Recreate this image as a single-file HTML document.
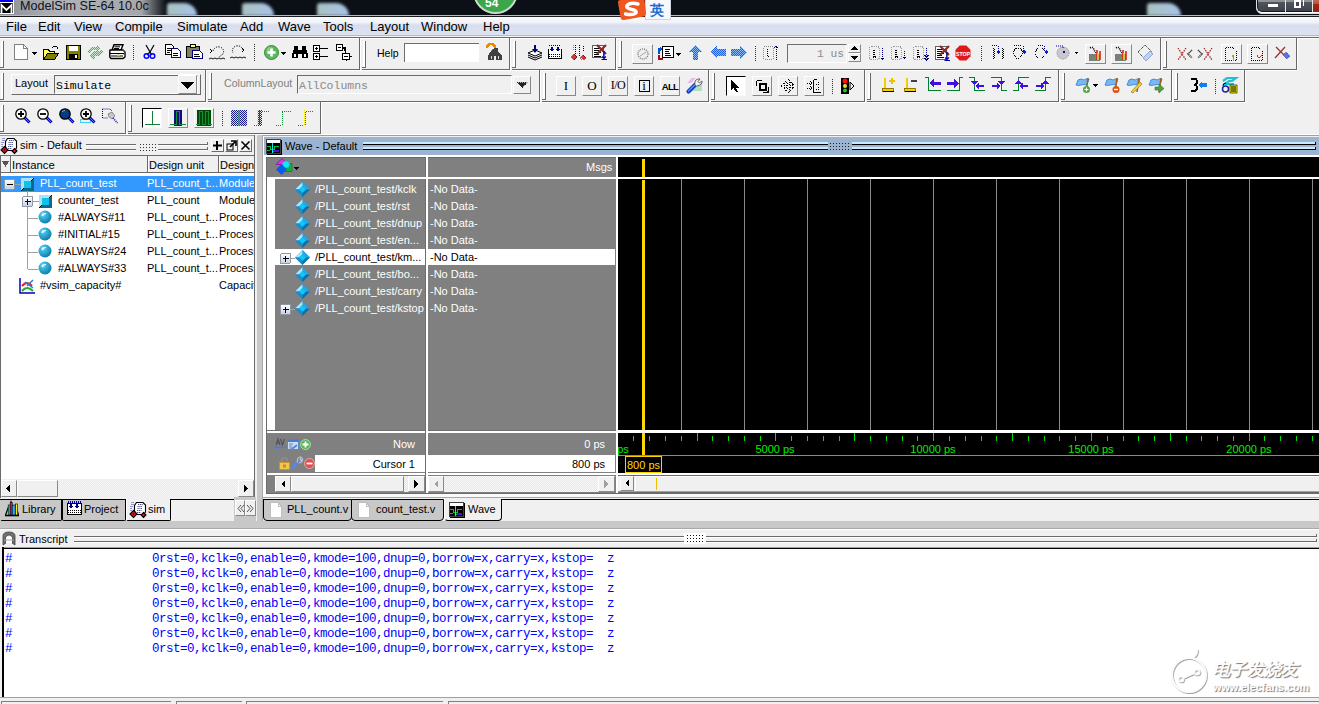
<!DOCTYPE html><html><head><meta charset="utf-8"><style>
*{box-sizing:border-box}
html,body{margin:0;padding:0}
body{width:1319px;height:704px;overflow:hidden;background:#f0f0f0;position:relative;font-family:"Liberation Sans",sans-serif;}
.a{position:absolute}
.t{position:absolute;white-space:pre;line-height:1}
svg{position:absolute;overflow:visible}
</style></head><body>
<div class="a" style="left:0px;top:0px;width:1319px;height:16px;background:#0b0f16"></div>
<div class="a" style="left:0px;top:0px;width:166px;height:16px;background:linear-gradient(90deg,#8a8e94 0%,#b0b4b8 35%,#a4a8ac 85%,rgba(11,15,22,0) 100%)"></div>
<div class="a" style="left:167px;top:3px;width:30px;height:13px;background:linear-gradient(90deg,#a8c0c0,#a8c4e8);border-radius:3px 13px 0 0;filter:blur(1.6px)"></div>
<div class="a" style="left:242px;top:3px;width:32px;height:13px;background:linear-gradient(90deg,#a8c0c0,#a8c4e8);border-radius:3px 13px 0 0;filter:blur(1.6px)"></div>
<div class="a" style="left:317px;top:3px;width:32px;height:13px;background:linear-gradient(90deg,#a8c0c0,#a8c4e8);border-radius:3px 13px 0 0;filter:blur(1.6px)"></div>
<div class="a" style="left:1147px;top:3px;width:34px;height:13px;background:linear-gradient(90deg,#a8c0c0,#a8c4e8);border-radius:3px 13px 0 0;filter:blur(1.6px)"></div>
<div class="a" style="left:0px;top:0px;width:13px;height:2px;background:#0000f0"></div>
<div class="a" style="left:13px;top:0px;width:1px;height:2px;background:#fff"></div>
<div class="a" style="left:0px;top:2px;width:14px;height:12px;background:#000;border:1px solid #fff;border-left:0"></div>
<svg style="left:0px;top:4px" width="13" height="10" viewBox="0 0 13 10"><path d="M1.5 9V1.2L6.5 6L11.5 1.2V9" fill="none" stroke="#fff" stroke-width="1.8"/></svg>
<div class="t" style="left:20px;top:0px;font-size:12.6px;color:#101020;">ModelSim SE-64 10.0c</div>
<div class="a" style="left:473px;top:-31px;width:45px;height:45px;border-radius:50%;background:#3aa84a;border:2px solid #cfd8cf"></div>
<div class="t" style="left:485px;top:-3px;font-size:12px;color:#fff;font-weight:bold">54</div>
<div class="a" style="left:1256px;top:-2px;width:70px;height:16px;border:1px solid #e0e0e0;border-radius:0 0 4px 6px;background:#fff"></div>
<div class="a" style="left:1257px;top:-2px;width:70px;height:14px;border-bottom:1px solid #181818;border-left:1px solid #181818;border-radius:0 0 3px 5px;background:linear-gradient(#9a9c9e 0px,#8c9094 4px,#50565e 4px,#3e444c 100%)"></div>
<div class="a" style="left:1285px;top:0px;width:1px;height:12px;background:#e8e8e8"></div>
<div class="a" style="left:1313px;top:0px;width:6px;height:12px;background:linear-gradient(#c06a58 0,#b85040 4px,#a02a10 4px,#902010 100%)"></div>
<div class="a" style="left:1312px;top:0px;width:1px;height:12px;background:#e8e8e8"></div>
<div class="a" style="left:1268px;top:4px;width:10px;height:3px;background:#fff;box-shadow:0 0 1px #334"></div>
<div class="a" style="left:1294px;top:0px;width:7px;height:8px;border:2px solid #fff;background:#445;box-shadow:0 0 1px #334"></div>
<div class="a" style="left:1303px;top:0px;width:1px;height:6px;background:#fff"></div>
<div class="a" style="left:0px;top:15px;width:1319px;height:1px;background:#b9bcc0"></div>
<div class="a" style="left:0px;top:16px;width:1319px;height:1px;background:#1a1c20"></div>
<div class="a" style="left:0px;top:17px;width:1319px;height:18px;background:linear-gradient(#fbfcfe 0%,#f0f2f8 30%,#d8deee 45%,#dde2f0 100%)"></div>
<div class="a" style="left:0px;top:35px;width:1319px;height:1px;background:#b6bac8"></div>
<div class="a" style="left:0px;top:36px;width:1319px;height:1px;background:#f4f4f4"></div>
<div class="a" style="left:0px;top:37px;width:1319px;height:1px;background:#6a6a6a"></div>
<div class="a" style="left:0px;top:38px;width:1319px;height:1px;background:#ffffff"></div>
<div class="a" style="left:645px;top:0px;width:26px;height:20px;background:#f6f8fb;border:1px solid #d0d4dc;border-top:0"></div>
<div class="t" style="left:650px;top:3px;font-size:14px;color:#1a6cd0;font-weight:bold">英</div>
<svg style="left:617px;top:-2px" width="30" height="24"><path d="M3 2 L24 -1 Q27 -1 27.5 2 L29 15 Q29.5 18 26.5 18.5 L7 22 Q4 22.5 3.5 19.5 L1 5 Q0.5 2.5 3 2Z" fill="#f0561e"/><path d="M21 6 Q13 4 10 7.5 Q8.5 10 15 11.5 Q20 12.5 19 15 Q16 17.5 8.5 16" fill="none" stroke="#fff" stroke-width="3.4" stroke-linecap="round"/></svg>
<div class="t" style="left:6px;top:20px;font-size:13px;color:#000;">File</div>
<div class="t" style="left:38px;top:20px;font-size:13px;color:#000;">Edit</div>
<div class="t" style="left:74px;top:20px;font-size:13px;color:#000;">View</div>
<div class="t" style="left:115px;top:20px;font-size:13px;color:#000;">Compile</div>
<div class="t" style="left:177px;top:20px;font-size:13px;color:#000;">Simulate</div>
<div class="t" style="left:240px;top:20px;font-size:13px;color:#000;">Add</div>
<div class="t" style="left:278px;top:20px;font-size:13px;color:#000;">Wave</div>
<div class="t" style="left:323px;top:20px;font-size:13px;color:#000;">Tools</div>
<div class="t" style="left:370px;top:20px;font-size:13px;color:#000;">Layout</div>
<div class="t" style="left:421px;top:20px;font-size:13px;color:#000;">Window</div>
<div class="t" style="left:483px;top:20px;font-size:13px;color:#000;">Help</div>
<div class="a" style="left:359px;top:38px;width:1px;height:32px;background:#686868"></div><div class="a" style="left:360px;top:38px;width:1px;height:33px;background:#fff"></div><div class="a" style="left:0px;top:69px;width:359px;height:1px;background:#686868"></div><div class="a" style="left:0px;top:70px;width:360px;height:1px;background:#fff"></div><div class="a" style="left:1px;top:41px;width:2px;height:26px;background:#fff"></div><div class="a" style="left:3px;top:41px;width:1px;height:27px;background:#686868"></div><div class="a" style="left:0px;top:67px;width:4px;height:1px;background:#686868"></div>
<div class="a" style="left:509px;top:38px;width:1px;height:32px;background:#686868"></div><div class="a" style="left:510px;top:38px;width:1px;height:33px;background:#fff"></div><div class="a" style="left:362px;top:69px;width:147px;height:1px;background:#686868"></div><div class="a" style="left:362px;top:70px;width:148px;height:1px;background:#fff"></div><div class="a" style="left:363px;top:41px;width:2px;height:26px;background:#fff"></div><div class="a" style="left:365px;top:41px;width:1px;height:27px;background:#686868"></div><div class="a" style="left:362px;top:67px;width:4px;height:1px;background:#686868"></div>
<div class="a" style="left:615px;top:38px;width:1px;height:32px;background:#686868"></div><div class="a" style="left:616px;top:38px;width:1px;height:33px;background:#fff"></div><div class="a" style="left:512px;top:69px;width:103px;height:1px;background:#686868"></div><div class="a" style="left:512px;top:70px;width:104px;height:1px;background:#fff"></div><div class="a" style="left:513px;top:41px;width:2px;height:26px;background:#fff"></div><div class="a" style="left:515px;top:41px;width:1px;height:27px;background:#686868"></div><div class="a" style="left:512px;top:67px;width:4px;height:1px;background:#686868"></div>
<div class="a" style="left:1160px;top:38px;width:1px;height:32px;background:#686868"></div><div class="a" style="left:1161px;top:38px;width:1px;height:33px;background:#fff"></div><div class="a" style="left:618px;top:69px;width:542px;height:1px;background:#686868"></div><div class="a" style="left:618px;top:70px;width:543px;height:1px;background:#fff"></div><div class="a" style="left:619px;top:41px;width:2px;height:26px;background:#fff"></div><div class="a" style="left:621px;top:41px;width:1px;height:27px;background:#686868"></div><div class="a" style="left:618px;top:67px;width:4px;height:1px;background:#686868"></div>
<div class="a" style="left:1296px;top:38px;width:1px;height:32px;background:#686868"></div><div class="a" style="left:1297px;top:38px;width:1px;height:33px;background:#fff"></div><div class="a" style="left:1163px;top:69px;width:133px;height:1px;background:#686868"></div><div class="a" style="left:1163px;top:70px;width:134px;height:1px;background:#fff"></div><div class="a" style="left:1164px;top:41px;width:2px;height:26px;background:#fff"></div><div class="a" style="left:1166px;top:41px;width:1px;height:27px;background:#686868"></div><div class="a" style="left:1163px;top:67px;width:4px;height:1px;background:#686868"></div>
<div class="a" style="left:205px;top:70px;width:1px;height:32px;background:#686868"></div><div class="a" style="left:206px;top:70px;width:1px;height:33px;background:#fff"></div><div class="a" style="left:0px;top:101px;width:205px;height:1px;background:#686868"></div><div class="a" style="left:0px;top:102px;width:206px;height:1px;background:#fff"></div><div class="a" style="left:1px;top:73px;width:2px;height:26px;background:#fff"></div><div class="a" style="left:3px;top:73px;width:1px;height:27px;background:#686868"></div><div class="a" style="left:0px;top:99px;width:4px;height:1px;background:#686868"></div>
<div class="a" style="left:539px;top:70px;width:1px;height:32px;background:#686868"></div><div class="a" style="left:540px;top:70px;width:1px;height:33px;background:#fff"></div><div class="a" style="left:208px;top:101px;width:331px;height:1px;background:#686868"></div><div class="a" style="left:208px;top:102px;width:332px;height:1px;background:#fff"></div><div class="a" style="left:209px;top:73px;width:2px;height:26px;background:#fff"></div><div class="a" style="left:211px;top:73px;width:1px;height:27px;background:#686868"></div><div class="a" style="left:208px;top:99px;width:4px;height:1px;background:#686868"></div>
<div class="a" style="left:708px;top:70px;width:1px;height:32px;background:#686868"></div><div class="a" style="left:709px;top:70px;width:1px;height:33px;background:#fff"></div><div class="a" style="left:542px;top:101px;width:166px;height:1px;background:#686868"></div><div class="a" style="left:542px;top:102px;width:167px;height:1px;background:#fff"></div><div class="a" style="left:543px;top:73px;width:2px;height:26px;background:#fff"></div><div class="a" style="left:545px;top:73px;width:1px;height:27px;background:#686868"></div><div class="a" style="left:542px;top:99px;width:4px;height:1px;background:#686868"></div>
<div class="a" style="left:864px;top:70px;width:1px;height:32px;background:#686868"></div><div class="a" style="left:865px;top:70px;width:1px;height:33px;background:#fff"></div><div class="a" style="left:711px;top:101px;width:153px;height:1px;background:#686868"></div><div class="a" style="left:711px;top:102px;width:154px;height:1px;background:#fff"></div><div class="a" style="left:712px;top:73px;width:2px;height:26px;background:#fff"></div><div class="a" style="left:714px;top:73px;width:1px;height:27px;background:#686868"></div><div class="a" style="left:711px;top:99px;width:4px;height:1px;background:#686868"></div>
<div class="a" style="left:1058px;top:70px;width:1px;height:32px;background:#686868"></div><div class="a" style="left:1059px;top:70px;width:1px;height:33px;background:#fff"></div><div class="a" style="left:867px;top:101px;width:191px;height:1px;background:#686868"></div><div class="a" style="left:867px;top:102px;width:192px;height:1px;background:#fff"></div><div class="a" style="left:868px;top:73px;width:2px;height:26px;background:#fff"></div><div class="a" style="left:870px;top:73px;width:1px;height:27px;background:#686868"></div><div class="a" style="left:867px;top:99px;width:4px;height:1px;background:#686868"></div>
<div class="a" style="left:1171px;top:70px;width:1px;height:32px;background:#686868"></div><div class="a" style="left:1172px;top:70px;width:1px;height:33px;background:#fff"></div><div class="a" style="left:1061px;top:101px;width:110px;height:1px;background:#686868"></div><div class="a" style="left:1061px;top:102px;width:111px;height:1px;background:#fff"></div><div class="a" style="left:1062px;top:73px;width:2px;height:26px;background:#fff"></div><div class="a" style="left:1064px;top:73px;width:1px;height:27px;background:#686868"></div><div class="a" style="left:1061px;top:99px;width:4px;height:1px;background:#686868"></div>
<div class="a" style="left:1244px;top:70px;width:1px;height:32px;background:#686868"></div><div class="a" style="left:1245px;top:70px;width:1px;height:33px;background:#fff"></div><div class="a" style="left:1174px;top:101px;width:70px;height:1px;background:#686868"></div><div class="a" style="left:1174px;top:102px;width:71px;height:1px;background:#fff"></div><div class="a" style="left:1175px;top:73px;width:2px;height:26px;background:#fff"></div><div class="a" style="left:1177px;top:73px;width:1px;height:27px;background:#686868"></div><div class="a" style="left:1174px;top:99px;width:4px;height:1px;background:#686868"></div>
<div class="a" style="left:125px;top:102px;width:1px;height:32px;background:#686868"></div><div class="a" style="left:126px;top:102px;width:1px;height:33px;background:#fff"></div><div class="a" style="left:0px;top:133px;width:125px;height:1px;background:#686868"></div><div class="a" style="left:0px;top:134px;width:126px;height:1px;background:#fff"></div><div class="a" style="left:1px;top:105px;width:2px;height:26px;background:#fff"></div><div class="a" style="left:3px;top:105px;width:1px;height:27px;background:#686868"></div><div class="a" style="left:0px;top:131px;width:4px;height:1px;background:#686868"></div>
<div class="a" style="left:320px;top:102px;width:1px;height:32px;background:#686868"></div><div class="a" style="left:321px;top:102px;width:1px;height:33px;background:#fff"></div><div class="a" style="left:128px;top:133px;width:192px;height:1px;background:#686868"></div><div class="a" style="left:128px;top:134px;width:193px;height:1px;background:#fff"></div><div class="a" style="left:129px;top:105px;width:2px;height:26px;background:#fff"></div><div class="a" style="left:131px;top:105px;width:1px;height:27px;background:#686868"></div><div class="a" style="left:128px;top:131px;width:4px;height:1px;background:#686868"></div>
<svg style="left:14px;top:44px" width="14" height="16" viewBox="0 0 14 16" shape-rendering="crispEdges"><path d="M0.5 0.5H9.5L13.5 4.5V15.5H0.5Z" fill="#fff" stroke="#808080"/><path d="M9.5 0.5V4.5H13.5" fill="none" stroke="#808080"/></svg>
<svg style="left:32px;top:52px" width="6" height="4" viewBox="0 0 6 4" shape-rendering="crispEdges"><path d="M0 0H5L2.5 3Z" fill="#000"/></svg>
<svg style="left:43px;top:45px" width="16" height="15" viewBox="0 0 16 15" shape-rendering="crispEdges"><path d="M9 3 Q11 0 14 2 L15 4" fill="none" stroke="#000" stroke-width="1"/><path d="M0.5 4.5H5.5L6.5 6.5H11.5V9.5H4.5L0.5 14.5Z" fill="#ffff60" stroke="#000"/><path d="M0.5 14.5L4.5 8.5H15.5L11.5 14.5Z" fill="#808000" stroke="#000"/></svg>
<svg style="left:66px;top:45px" width="15" height="15" viewBox="0 0 15 15" shape-rendering="crispEdges"><path d="M0.5 0.5H14.5V14.5H0.5Z" fill="#808000" stroke="#000"/><rect x="3" y="1" width="9" height="5" fill="#fff"/><rect x="3" y="9" width="9" height="5" fill="#000"/><rect x="9" y="10" width="2" height="3" fill="#fff"/></svg>
<svg style="left:87px;top:44px" width="17" height="17" viewBox="0 0 17 17" shape-rendering="crispEdges"><defs><pattern id="gck" width="2" height="2" patternUnits="userSpaceOnUse"><rect width="1" height="1" fill="#5aa866"/><rect x="1" y="1" width="1" height="1" fill="#5aa866"/><rect x="1" width="1" height="1" fill="#cce8d0"/><rect y="1" width="1" height="1" fill="#cce8d0"/></pattern></defs><path d="M0 8L4 3H10L10 1L13 4L10 7L9 6H5L2 9Z" fill="url(#gck)"/><path d="M3 12L7 7H12L14 5L16 8L12 12H8L8 14L6 16L3 13Z" fill="url(#gck)"/></svg>
<svg style="left:109px;top:44px" width="17" height="15" viewBox="0 0 17 15"><path d="M5 0.8H14L12 6H3Z" fill="#fff" stroke="#000" stroke-width="1.4"/><path d="M5.5 2.8H11M5 4.5H10" stroke="#000" stroke-width="1"/><path d="M1 6H14L16 8V13L14 14.5H2L0.8 13V7Z" fill="#fff" stroke="#000" stroke-width="1.4"/><path d="M1 9.5H15M2 12H14" stroke="#000" stroke-width="1.2"/><rect x="8" y="10.2" width="3" height="1.4" fill="#f0f000"/><path d="M14 6L16 8M14 10L16 12" stroke="#888" stroke-width="0.8" stroke-dasharray="1 1"/></svg>
<div class="a" style="left:133px;top:45px;width:1px;height:16px;background:repeating-linear-gradient(#333 0 1px,transparent 1px 2px)"></div>
<svg style="left:143px;top:45px" width="13" height="14" viewBox="0 0 13 14"><path d="M3 0 L7 7 L11 0 M7 7 L4 10 M7 7 L9 10" fill="none" stroke="#000" stroke-width="1.2"/><circle cx="3.5" cy="11" r="2.3" fill="none" stroke="#0000ff" stroke-width="1.5"/><circle cx="9.5" cy="11" r="2.3" fill="none" stroke="#0000ff" stroke-width="1.5"/></svg>
<svg style="left:165px;top:44px" width="16" height="14" viewBox="0 0 16 14" shape-rendering="crispEdges"><path d="M0.5 0.5H6.5L8.5 2.5V10.5H0.5Z" fill="#fff" stroke="#000"/><path d="M6.5 4.5H12.5L15.5 7.5V13.5H6.5Z" fill="#fff" stroke="#000080"/><path d="M2 4H6M2 6H6M2 8H5M8 9H13M8 11H13" stroke="#000"/></svg>
<svg style="left:186px;top:44px" width="17" height="15" viewBox="0 0 17 15" shape-rendering="crispEdges"><path d="M0.5 2.5H13.5V13.5H0.5Z" fill="#808060" stroke="#000"/><path d="M4.5 0.5H9.5V3.5H4.5Z" fill="#ffff80" stroke="#000"/><path d="M6.5 6.5H13.5L16.5 9.5V14.5H6.5Z" fill="#fff" stroke="#000080"/><path d="M8 10H13M8 12H14" stroke="#000"/></svg>
<svg style="left:209px;top:46px" width="17" height="14" viewBox="0 0 17 14"><path d="M4 5 Q6 0 11 1 Q16 3 14 8 L10 11" fill="none" stroke="#000" stroke-dasharray="1.2 1.2"/><path d="M1 3 L3 5 L1 7" fill="none" stroke="#000"/><path d="M0 13 L2 12 L4 13 L6 12 L8 13 L10 12 L12 13 L14 12 L16 13" fill="none" stroke="#000" stroke-width="0.9"/></svg>
<svg style="left:230px;top:45px" width="17" height="14" viewBox="0 0 17 14"><path d="M13 5 Q11 0 6 1 Q1 3 3 8" fill="none" stroke="#000" stroke-dasharray="1.2 1.2"/><path d="M12 3 L14 5 L12 7" fill="none" stroke="#000"/><path d="M0 13 L2 12 L4 13 L6 12 L8 13 L10 12 L12 13 L14 12 L16 13" fill="none" stroke="#000" stroke-width="0.9"/></svg>
<div class="a" style="left:254px;top:44px;width:1px;height:17px;background:repeating-linear-gradient(#333 0 1px,transparent 1px 2px)"></div>
<svg style="left:264px;top:45px" width="15" height="15" viewBox="0 0 15 15"><circle cx="7.5" cy="7.5" r="7" fill="#5cb85c" stroke="#3a8a3a"/><circle cx="6" cy="5.5" r="3.5" fill="#9ad89a" opacity="0.6"/><path d="M7.5 3.5V11.5M3.5 7.5H11.5" stroke="#fff" stroke-width="2.6"/></svg>
<svg style="left:281px;top:52px" width="6" height="4" viewBox="0 0 6 4" shape-rendering="crispEdges"><path d="M0 0H5L2.5 3Z" fill="#000"/></svg>
<svg style="left:292px;top:45px" width="16" height="14" viewBox="0 0 16 14" shape-rendering="crispEdges"><path d="M2 1H6V5H10V1H14V4L16 9V13H10V9H6V13H0V9L2 4Z" fill="#000"/><rect x="2" y="9" width="2" height="3" fill="#fff"/><rect x="12" y="9" width="2" height="3" fill="#fff"/></svg>
<svg style="left:313px;top:45px" width="16" height="15" viewBox="0 0 16 15" shape-rendering="crispEdges"><rect x="0.5" y="0.5" width="6" height="6" fill="#fff" stroke="#000"/><path d="M2 3.5H5M3.5 2V5" stroke="#000"/><rect x="0.5" y="8.5" width="6" height="6" fill="#fff" stroke="#000"/><path d="M2 11.5H5M3.5 10V13" stroke="#000"/><path d="M7 3.5H15M7 11.5H15" stroke="#000"/></svg>
<svg style="left:336px;top:44px" width="17" height="17" viewBox="0 0 17 17" shape-rendering="crispEdges"><rect x="0.5" y="0.5" width="6" height="6" fill="#fff" stroke="#000"/><path d="M2 3.5H5" stroke="#000"/><path d="M7 3.5H9.5V9" stroke="#000"/><rect x="6.5" y="9.5" width="7" height="6" fill="#fff" stroke="#000"/><path d="M8 12.5H12M14 12.5H16M10 16V17" stroke="#000"/></svg>
<div class="t" style="left:377px;top:48px;font-size:10.5px;color:#000;">Help</div>
<div class="a" style="left:404px;top:43px;width:75px;height:19px;background:#fff;border-top:1px solid #6d6d6d;border-left:1px solid #6d6d6d"></div>
<svg style="left:486px;top:44px" width="17" height="17" viewBox="0 0 17 17" shape-rendering="crispEdges"><path d="M1 4 Q1 0 5 0 Q9 0 9 4 Q9 6 6 7 V9" fill="none" stroke="#f08800" stroke-width="2.4"/><rect x="4" y="11" width="3" height="3" fill="#f08800"/><path d="M8 4H12V7L16 12V16H10V12H8V16H2V12L4 8Z" fill="#404040"/><rect x="5" y="12" width="1" height="3" fill="#ddd"/><rect x="12" y="12" width="1" height="3" fill="#ddd"/></svg>
<svg style="left:527px;top:45px" width="16" height="15" viewBox="0 0 16 15"><path d="M1 8 L8 5 L15 8 L8 11Z" fill="#fff" stroke="#000"/><path d="M1 10 L8 13 L15 10 M1 12 L8 15 L15 12" fill="none" stroke="#000"/><path d="M8 0V7" stroke="#000080" stroke-width="2"/><path d="M5 4L8 8L11 4Z" fill="#000080"/></svg>
<svg style="left:548px;top:44px" width="14" height="15" viewBox="0 0 14 15" shape-rendering="crispEdges"><path d="M0.5 4.5V14.5H13.5V4.5" fill="#fff" stroke="#000"/><path d="M1 10H13M1 12H13" stroke="#000" stroke-dasharray="1 1"/><path d="M1 1H13" stroke="#0000a0" stroke-dasharray="1 1"/><path d="M4 3V7M10 3V7" stroke="#000080" stroke-width="1.5"/><path d="M2 5L4 8L6 5ZM8 5L10 8L12 5Z" fill="#000080"/></svg>
<svg style="left:571px;top:45px" width="15" height="15" viewBox="0 0 15 15" shape-rendering="crispEdges"><path d="M4 0V9M8 0V11M12 1V6" stroke="#000" stroke-dasharray="1 1"/><path d="M2 0V6" stroke="#8080c0" stroke-dasharray="1 1"/><path d="M3 9L6 12L3 15L0 12Z" fill="#e03030" stroke="#000" stroke-width="0.5"/><path d="M12 10L14.5 12.5L12 15L9.5 12.5Z" fill="#e03030" stroke="#000" stroke-width="0.5"/></svg>
<svg style="left:592px;top:44px" width="16" height="17" viewBox="0 0 16 17" shape-rendering="crispEdges"><path d="M0.5 1.5H11.5V13.5H0.5Z" fill="#fff" stroke="#606060"/><path d="M2 4.5H8M2 6.5H7M2 8.5H9M2 10.5H7M2 12.5H9" stroke="#000"/></svg><svg style="left:592px;top:44px" width="16" height="17" viewBox="0 0 16 17"><path d="M5 1 L14 10 M14 1 L5 10" stroke="#902828" stroke-width="2.2"/><path d="M12 7V15M9.5 15.5H15M10 12.5L12 14.5L14 12.5" stroke="#0000b0" stroke-width="1.2" fill="none"/></svg>
<div class="a" style="left:632px;top:44px;width:21px;height:20px;background:#f0f0f0;border-top:1px solid #fff;border-left:1px solid #fff;border-right:1px solid #888;border-bottom:1px solid #888"></div>
<svg style="left:637px;top:48px" width="12" height="12" viewBox="0 0 12 12"><circle cx="6" cy="6" r="5" fill="none" stroke="#888" stroke-width="1.6" stroke-dasharray="1 1"/><path d="M3 8 L9 4" stroke="#a0a0c0"/></svg>
<svg style="left:657px;top:46px" width="18" height="14" viewBox="0 0 18 14" shape-rendering="crispEdges"><path d="M2 8V3H4" fill="none" stroke="#0050d0" stroke-width="2"/><path d="M3 1L6 3L3 5Z" fill="#0050d0"/><path d="M2 9V13H6" fill="none" stroke="#a01010" stroke-width="2"/><path d="M5.5 0.5H16.5V11.5H5.5Z" fill="#fff" stroke="#000"/><path d="M8 3H13M8 5H12M8 7H13M8 9H14" stroke="#000"/></svg>
<svg style="left:676px;top:53px" width="6" height="4" viewBox="0 0 6 4" shape-rendering="crispEdges"><path d="M0 0H5L2.5 3Z" fill="#000"/></svg>
<svg style="left:688px;top:45px" width="15" height="16" viewBox="0 0 15 16" shape-rendering="crispEdges"><defs><pattern id="bck1" width="2" height="2" patternUnits="userSpaceOnUse"><rect width="2" height="2" fill="#8ab8f0"/><rect width="1" height="1" fill="#1a60e0"/><rect x="1" y="1" width="1" height="1" fill="#1a60e0"/></pattern></defs><path d="M7 0L14 7H10V15H5V7H0Z" fill="url(#bck1)"/></svg>
<svg style="left:710px;top:46px" width="17" height="13" viewBox="0 0 17 13" shape-rendering="crispEdges"><defs><pattern id="bck2" width="2" height="2" patternUnits="userSpaceOnUse"><rect width="2" height="2" fill="#8ab8f0"/><rect width="1" height="1" fill="#1a60e0"/><rect x="1" y="1" width="1" height="1" fill="#1a60e0"/></pattern></defs><path d="M0 6L7 0V3H16V10H7V13Z" fill="url(#bck2)"/></svg>
<svg style="left:731px;top:46px" width="16" height="13" viewBox="0 0 16 13" shape-rendering="crispEdges"><defs><pattern id="bck3" width="2" height="2" patternUnits="userSpaceOnUse"><rect width="2" height="2" fill="#8ab8f0"/><rect width="1" height="1" fill="#1a60e0"/><rect x="1" y="1" width="1" height="1" fill="#1a60e0"/></pattern></defs><path d="M16 6L9 0V3H0V10H9V13Z" fill="url(#bck3)"/></svg>
<div class="a" style="left:755px;top:46px;width:1px;height:16px;background:repeating-linear-gradient(#333 0 1px,transparent 1px 2px)"></div>
<svg style="left:763px;top:45px" width="18" height="16" viewBox="0 0 18 16" shape-rendering="crispEdges"><rect x="0.5" y="1.5" width="10" height="13" rx="2" fill="none" stroke="#888" stroke-dasharray="1 1"/><path d="M4 4V11H7" stroke="#000" stroke-dasharray="1 1" fill="none"/><path d="M13 2V15" stroke="#000080" stroke-dasharray="1 1"/><path d="M11 3L13 1L15 3" stroke="#000080" fill="none"/></svg>
<div class="a" style="left:787px;top:44px;width:60px;height:19px;background:#f0f0f0;border-top:1px solid #6d6d6d;border-left:1px solid #6d6d6d;border-right:1px solid #fff;border-bottom:1px solid #fff"></div>
<div class="t" style="left:817px;top:49px;font-size:11.2px;color:#8a8a8a;font-family:'Liberation Mono',monospace">1 us</div>
<div class="a" style="left:848px;top:44px;width:13px;height:9px;background:#f0f0f0;border-top:1px solid #fff;border-left:1px solid #fff;border-right:1px solid #888;border-bottom:1px solid #888"></div>
<div class="a" style="left:848px;top:53px;width:13px;height:9px;background:#f0f0f0;border-top:1px solid #fff;border-left:1px solid #fff;border-right:1px solid #888;border-bottom:1px solid #888"></div>
<svg style="left:851px;top:46px" width="7" height="5" viewBox="0 0 7 5" shape-rendering="crispEdges"><path d="M3.5 0L7 4H0Z" fill="#000"/></svg>
<svg style="left:851px;top:56px" width="7" height="5" viewBox="0 0 7 5" shape-rendering="crispEdges"><path d="M0 0H7L3.5 4Z" fill="#000"/></svg>
<svg style="left:869px;top:45px" width="17" height="16" viewBox="0 0 17 16" shape-rendering="crispEdges"><rect x="0.5" y="1.5" width="10" height="13" rx="2.5" fill="none" stroke="#999" stroke-dasharray="1 1"/><path d="M4 4.5V12.5H8M5 4.5V11.5H8" stroke="#000" stroke-dasharray="1 1" fill="none"/><path d="M13.5 3V15" stroke="#000090" stroke-dasharray="1 1"/><path d="M12 13L13.5 14.5L15 13" stroke="#000090" fill="none"/></svg>
<svg style="left:891px;top:45px" width="17" height="16" viewBox="0 0 17 16" shape-rendering="crispEdges"><rect x="0.5" y="1.5" width="10" height="13" rx="2.5" fill="none" stroke="#999" stroke-dasharray="1 1"/><path d="M4 4.5V12.5H8M5 4.5V11.5H8" stroke="#000" stroke-dasharray="1 1" fill="none"/><path d="M13.5 6V13" stroke="#000090" stroke-dasharray="1 1"/><path d="M12 12L13.5 13.5L15 12" stroke="#000090" fill="none"/></svg>
<svg style="left:913px;top:45px" width="17" height="16" viewBox="0 0 17 16" shape-rendering="crispEdges"><rect x="0.5" y="1.5" width="10" height="13" rx="2.5" fill="none" stroke="#999" stroke-dasharray="1 1"/><path d="M4 4.5V12.5H8M5 4.5V11.5H8" stroke="#000" stroke-dasharray="1 1" fill="none"/><path d="M13.5 3V12" stroke="#000090" stroke-dasharray="1 1"/><path d="M11.5 10L13.5 12L15.5 10M11.5 13L13.5 15L15.5 13" stroke="#000090" fill="none"/></svg>
<svg style="left:935px;top:45px" width="17" height="17" viewBox="0 0 17 17" shape-rendering="crispEdges"><path d="M0.5 1.5H11.5V14.5H0.5Z" fill="#fff" stroke="#606060"/><path d="M2 4.5H8M2 6.5H7M2 8.5H9M2 10.5H7M2 12.5H9" stroke="#000"/></svg><svg style="left:935px;top:45px" width="17" height="17" viewBox="0 0 17 17"><path d="M5 1 L14 10 M14 1 L5 10" stroke="#902828" stroke-width="2.2"/><path d="M12 7V15M9.5 15.5H15M10 12.5L12 14.5L14 12.5" stroke="#0000b0" stroke-width="1.2" fill="none"/></svg>
<svg style="left:955px;top:45px" width="16" height="16" viewBox="0 0 16 16"><path d="M4.7 0.5H11.3L15.5 4.7V11.3L11.3 15.5H4.7L0.5 11.3V4.7Z" fill="#e01818"/><text x="8" y="10.6" font-size="6.2" font-weight="bold" fill="#fff" text-anchor="middle" font-family="Liberation Sans" textLength="14" lengthAdjust="spacingAndGlyphs">STOP</text></svg>
<div class="a" style="left:981px;top:46px;width:1px;height:16px;background:repeating-linear-gradient(#333 0 1px,transparent 1px 2px)"></div>
<svg style="left:991px;top:45px" width="14" height="15" viewBox="0 0 14 15" shape-rendering="crispEdges"><path d="M1 0.5H7M7 1V6" stroke="#000090" stroke-dasharray="1 1" fill="none"/><path d="M2 3V14M3 4V13M11 3V14M12 4V13" stroke="#000" stroke-dasharray="1 1"/><path d="M7 5L9 7L7 9L5 7Z" fill="#1020c0"/></svg>
<svg style="left:1012px;top:45px" width="15" height="15" viewBox="0 0 15 15" shape-rendering="crispEdges"><path d="M2 0.5H10M11 1V6" stroke="#000090" stroke-dasharray="1 1" fill="none"/><path d="M4 3L1 7L4 13M8 3L11 7L8 13" stroke="#000" stroke-dasharray="1 1" fill="none"/><path d="M4 3H8M4 13H8" stroke="#000" stroke-dasharray="1 1"/><path d="M12 5L14 7L12 9L10 7Z" fill="#1020c0"/></svg>
<svg style="left:1033px;top:45px" width="16" height="15" viewBox="0 0 16 15" shape-rendering="crispEdges"><path d="M5 0.5H11M11 1V6" stroke="#000090" stroke-dasharray="1 1" fill="none"/><path d="M5 3L1 8L5 13M9 3L12 6M9 13L12 10" stroke="#000" stroke-dasharray="1 1" fill="none"/><path d="M13 5L15 7L13 9L11 7Z" fill="#1020c0"/></svg>
<svg style="left:1056px;top:45px" width="15" height="16" viewBox="0 0 15 16"><circle cx="7" cy="8" r="6" fill="#c8c8c8" stroke="#888" stroke-dasharray="1 1"/><path d="M0 1H7V4" stroke="#000080" stroke-dasharray="1 1" fill="none"/><rect x="7" y="6" width="2" height="2" fill="#0000c0"/></svg>
<svg style="left:1074px;top:52px" width="5" height="3" viewBox="0 0 5 3" shape-rendering="crispEdges"><path d="M0 0H4L2 2Z" fill="#000"/></svg>
<div class="a" style="left:1085px;top:44px;width:21px;height:20px;background:#f0f0f0;border-top:1px solid #fff;border-left:1px solid #fff;border-right:1px solid #888;border-bottom:1px solid #888"></div>
<svg style="left:1088px;top:47px" width="16" height="15" viewBox="0 0 16 15"><rect x="1" y="7" width="11" height="7" fill="#707070" opacity="0.9"/><path d="M2 1 Q5 -1 6 3 L8 6" fill="none" stroke="#000" stroke-width="1.5" stroke-dasharray="1 1"/><path d="M9 3V13M12 4V13" stroke="#e02020" stroke-width="1.6"/><path d="M10 6V13" stroke="#e0e020" stroke-width="1.6"/><path d="M5 13 L8 10" stroke="#30c030" stroke-width="1.2"/></svg>
<div class="a" style="left:1111px;top:44px;width:21px;height:20px;background:#f0f0f0;border-top:1px solid #fff;border-left:1px solid #fff;border-right:1px solid #888;border-bottom:1px solid #888"></div>
<svg style="left:1114px;top:47px" width="16" height="15" viewBox="0 0 16 15"><rect x="1" y="7" width="11" height="7" fill="#707070" opacity="0.9"/><path d="M2 1 Q5 -1 6 3 L8 6" fill="none" stroke="#000" stroke-width="1.5" stroke-dasharray="1 1"/><path d="M9 3V13M12 4V13" stroke="#e02020" stroke-width="1.6"/><path d="M10 6V13" stroke="#e0e020" stroke-width="1.6"/><path d="M5 13 L8 10" stroke="#30c030" stroke-width="1.2"/></svg>
<svg style="left:1137px;top:45px" width="17" height="16" viewBox="0 0 17 16"><path d="M1 7 L8 0 L15 7 L8 14Z" fill="none" stroke="#000" stroke-dasharray="1 1"/><path d="M6 13 L13 6 L16 9 L9 16Z" fill="#c0d0f0" stroke="#90a8e0"/></svg>
<svg style="left:1177px;top:48px" width="16" height="12" viewBox="0 0 16 12"><path d="M1 0 L9 12 M9 0 L1 12" stroke="#a02020" stroke-width="1.2" stroke-dasharray="1.5 1"/><path d="M15 2 L11 6 L15 10" fill="none" stroke="#333" stroke-width="1.6" stroke-dasharray="1 0.6"/></svg>
<svg style="left:1198px;top:48px" width="16" height="12" viewBox="0 0 16 12"><path d="M6 0 L14 12 M14 0 L6 12" stroke="#a02020" stroke-width="1.2" stroke-dasharray="1.5 1"/><path d="M0 2 L4 6 L0 10" fill="none" stroke="#333" stroke-width="1.6" stroke-dasharray="1 0.6"/></svg>
<div class="a" style="left:1221px;top:44px;width:21px;height:20px;background:#f0f0f0;border-top:1px solid #fff;border-left:1px solid #fff;border-right:1px solid #888;border-bottom:1px solid #888"></div>
<svg style="left:1225px;top:47px" width="13" height="15" viewBox="0 0 13 15" shape-rendering="crispEdges"><path d="M0.5 0.5H7.5L11.5 4.5V13.5H0.5Z" fill="none" stroke="#000" stroke-dasharray="1 1"/><path d="M7 8 L8 10 L9 8 M8 10V14" stroke="#b0a020" fill="none"/></svg>
<div class="a" style="left:1247px;top:44px;width:21px;height:20px;background:#f0f0f0;border-top:1px solid #fff;border-left:1px solid #fff;border-right:1px solid #888;border-bottom:1px solid #888"></div>
<svg style="left:1251px;top:47px" width="13" height="15" viewBox="0 0 13 15" shape-rendering="crispEdges"><path d="M0.5 0.5H7.5L11.5 4.5V13.5H0.5Z" fill="none" stroke="#000" stroke-dasharray="1 1"/><path d="M6 9 L8 11 L10 9" stroke="#e02020" fill="none"/><rect x="6" y="8" width="1" height="1" fill="#e02020"/><rect x="10" y="8" width="1" height="1" fill="#e02020"/></svg>
<svg style="left:1274px;top:46px" width="17" height="15" viewBox="0 0 17 15"><path d="M2 1 L12 11 M11 1 L1 12" stroke="#a03030" stroke-width="1.3"/><path d="M9 9 L12 6 L16 10 L13 13Z" fill="#6070e0" stroke="#3040c0" stroke-dasharray="1 1"/></svg>
<div class="a" style="left:11px;top:74px;width:190px;height:21px;border-top:1px solid #fff;border-left:1px solid #fff;border-right:1px solid #6a6a6a;border-bottom:1px solid #6a6a6a"></div>
<div class="t" style="left:15px;top:78px;font-size:11px;color:#000;">Layout</div>
<div class="a" style="left:54px;top:75px;width:144px;height:19px;border-top:1px solid #6a6a6a;border-left:1px solid #6a6a6a;border-right:1px solid #fff;border-bottom:1px solid #fff"></div>
<div class="t" style="left:56px;top:80px;font-size:11.5px;color:#000;font-family:'Liberation Mono',monospace">Simulate</div>
<div class="a" style="left:178px;top:75px;width:19px;height:19px;background:#f0f0f0;border-top:1px solid #fff;border-left:1px solid #fff;border-right:1px solid #888;border-bottom:1px solid #888"></div>
<svg style="left:181px;top:82px" width="13" height="7" viewBox="0 0 13 7" shape-rendering="crispEdges"><path d="M0 0H13L6.5 7Z" fill="#000"/></svg>
<div class="t" style="left:224px;top:78px;font-size:10.6px;color:#808080;">ColumnLayout</div>
<div class="a" style="left:297px;top:75px;width:215px;height:19px;border-top:1px solid #6a6a6a;border-left:1px solid #6a6a6a;border-right:1px solid #fff;border-bottom:1px solid #fff"></div>
<div class="t" style="left:299px;top:80px;font-size:11.5px;color:#8a8a8a;font-family:'Liberation Mono',monospace">AllColumns</div>
<div class="a" style="left:513px;top:76px;width:18px;height:18px;background:#f0f0f0;border-top:1px solid #fff;border-left:1px solid #fff;border-right:1px solid #888;border-bottom:1px solid #888"></div>
<svg style="left:516px;top:82px" width="12" height="7" viewBox="0 0 12 7" shape-rendering="crispEdges"><path d="M0 0H12L6 6Z" fill="#000" opacity="0.85"/><path d="M0 0H12L6 6Z" fill="none" stroke="#f0f0f0" stroke-width="0.7" stroke-dasharray="1 1"/></svg>
<div class="a" style="left:556px;top:76px;width:20px;height:20px;background:#f0f0f0;border-top:1px solid #fff;border-left:1px solid #fff;border-right:1px solid #888;border-bottom:1px solid #888"></div>
<div class="t" style="left:556px;top:79px;width:20px;text-align:center;color:#000;font-family:'Liberation Serif';font-size:13px">I</div>
<div class="a" style="left:582px;top:76px;width:20px;height:20px;background:#f0f0f0;border-top:1px solid #fff;border-left:1px solid #fff;border-right:1px solid #888;border-bottom:1px solid #888"></div>
<div class="t" style="left:582px;top:79px;width:20px;text-align:center;color:#000;font-family:'Liberation Serif';font-size:13px">O</div>
<div class="a" style="left:608px;top:76px;width:20px;height:20px;background:#f0f0f0;border-top:1px solid #fff;border-left:1px solid #fff;border-right:1px solid #888;border-bottom:1px solid #888"></div>
<div class="t" style="left:608px;top:79px;width:20px;text-align:center;color:#000;font-family:'Liberation Serif';font-size:12px;letter-spacing:-0.5px">I/O</div>
<div class="a" style="left:634px;top:76px;width:20px;height:20px;background:#f0f0f0;border-top:1px solid #fff;border-left:1px solid #fff;border-right:1px solid #888;border-bottom:1px solid #888"></div>
<div class="t" style="left:634px;top:79px;width:20px;text-align:center;color:#000;font-family:'Liberation Serif';font-size:13px">i</div>
<div class="a" style="left:660px;top:76px;width:20px;height:20px;background:#f0f0f0;border-top:1px solid #fff;border-left:1px solid #fff;border-right:1px solid #888;border-bottom:1px solid #888"></div>
<div class="t" style="left:660px;top:79px;width:20px;text-align:center;color:#000;font-weight:bold;font-size:9.5px;letter-spacing:-0.6px;padding-top:3px">ALL</div>
<div class="a" style="left:639px;top:80px;width:11px;height:12px;border:1px solid #000"></div>
<svg style="left:686px;top:77px" width="17" height="17" viewBox="0 0 17 17"><path d="M1 6 L6 1 H10 L5 6Z" fill="#e8b8e8"/><rect x="6" y="7" width="10" height="7" fill="#b8dcc0"/><path d="M2.5 14.5 L9.5 7.5" stroke="#1040d0" stroke-width="4.2" stroke-linecap="round"/><path d="M2.5 14 L8.5 8" stroke="#5a90f0" stroke-width="1.4" stroke-linecap="round"/><path d="M9 8 Q8 3 12 2 L14 2 L12 4.5 L13.5 6 L16 4 Q16.5 8 11 9" fill="#f4f4f4" stroke="#606060" stroke-width="1"/></svg>
<div class="a" style="left:726px;top:76px;width:20px;height:20px;background:#fff;border-top:1px solid #000;border-left:1px solid #000;border-right:1px solid #f8f8f8;border-bottom:1px solid #f8f8f8"></div>
<svg style="left:731px;top:80px" width="10" height="13" viewBox="0 0 10 13" shape-rendering="crispEdges"><path d="M0 0V10L2.5 8L5 12H7L5 7.5H8Z" fill="#000"/></svg>
<div class="a" style="left:752px;top:76px;width:20px;height:20px;background:#f0f0f0;border-top:1px solid #fff;border-left:1px solid #fff;border-right:1px solid #888;border-bottom:1px solid #888"></div>
<svg style="left:756px;top:80px" width="13" height="13" viewBox="0 0 13 13" shape-rendering="crispEdges"><path d="M0.5 0.5H6M0.5 0.5V6" stroke="#000" fill="none"/><rect x="3.5" y="3.5" width="6" height="6" fill="none" stroke="#000" stroke-width="2"/><path d="M12 7V12H7M10 10L12 12" stroke="#000" fill="none"/></svg>
<div class="a" style="left:778px;top:76px;width:20px;height:20px;background:#f0f0f0;border-top:1px solid #fff;border-left:1px solid #fff;border-right:1px solid #888;border-bottom:1px solid #888"></div>
<svg style="left:781px;top:79px" width="15" height="15" viewBox="0 0 15 15" shape-rendering="crispEdges"><path d="M7 0L10 3H8V6H11V4L14 7L11 10V8H8V11H10L7 14L4 11H6V8H3V10L0 7L3 4V6H6V3H4Z" fill="none" stroke="#000" stroke-dasharray="1 1"/></svg>
<div class="a" style="left:804px;top:76px;width:20px;height:20px;background:#f0f0f0;border-top:1px solid #fff;border-left:1px solid #fff;border-right:1px solid #888;border-bottom:1px solid #888"></div>
<svg style="left:806px;top:79px" width="16" height="14" viewBox="0 0 16 14" shape-rendering="crispEdges"><path d="M7.5 0.5H11M7.5 0.5V13.5H15" stroke="#000" fill="none"/><path d="M1 4H6M1 9H6M12 3V7M10 5H14M12 8V12M10 10H14" stroke="#000" stroke-dasharray="1 1"/><path d="M4 2L6 4L4 6M4 7L6 9L4 11" stroke="#000" fill="none"/></svg>
<div class="a" style="left:832px;top:79px;width:1px;height:16px;background:repeating-linear-gradient(#333 0 1px,transparent 1px 2px)"></div>
<svg style="left:841px;top:78px" width="17" height="17" viewBox="0 0 17 17"><rect x="0" y="0" width="8" height="16" fill="#000"/><circle cx="4" cy="3" r="2.5" fill="#ff1010"/><circle cx="4" cy="8" r="2" fill="#e8e030"/><circle cx="4" cy="12.5" r="2" fill="#30c030"/><path d="M9 4 L13 8 L9 12Z" fill="none" stroke="#000"/><path d="M8 8H9" stroke="#30a0e0"/></svg>
<svg style="left:881px;top:77px" width="15" height="15" viewBox="0 0 15 15" shape-rendering="crispEdges"><path d="M1 11H12V14H1Z" fill="#f0d000" stroke="#806000" stroke-width="0.8"/><path d="M4 1V11" stroke="#f0d000" stroke-width="2.2"/><path d="M8 4H14M11 1V7" stroke="#f0c000" stroke-width="1.6"/><path d="M2 14H13" stroke="#000"/></svg>
<svg style="left:903px;top:77px" width="15" height="15" viewBox="0 0 15 15" shape-rendering="crispEdges"><path d="M1 11H12V14H1Z" fill="#f0d000" stroke="#806000" stroke-width="0.8"/><path d="M4 1V11" stroke="#f0d000" stroke-width="2.2"/><path d="M8 4H14" stroke="#404040" stroke-width="1.4"/><path d="M2 14H13" stroke="#000"/></svg>
<svg style="left:925px;top:77px" width="17" height="15" viewBox="0 0 17 15" shape-rendering="crispEdges"><path d="M0 0.5H3.5V13.5H16" stroke="#00802a" fill="none" stroke-width="1.3"/><path d="M4 6L9 2V5H16V8H9V11Z" fill="#4010e0"/></svg>
<svg style="left:947px;top:77px" width="17" height="15" viewBox="0 0 17 15" shape-rendering="crispEdges"><path d="M0 13.5H12.5V0.5H16" stroke="#00802a" fill="none" stroke-width="1.3"/><path d="M12 6L7 2V5H0V8H7V11Z" fill="#4010e0"/></svg>
<svg style="left:969px;top:77px" width="17" height="15" viewBox="0 0 17 15" shape-rendering="crispEdges"><path d="M0 0.5H5.5V13.5H16" stroke="#00802a" fill="none" stroke-width="1.3"/><path d="M1 4H10L5.5 8Z" fill="#4010e0"/><path d="M6 9L10 6V8H15V10H10V12Z" fill="#4010e0"/></svg>
<svg style="left:991px;top:77px" width="17" height="15" viewBox="0 0 17 15" shape-rendering="crispEdges"><path d="M0 0.5H10.5V13.5H16" stroke="#00802a" fill="none" stroke-width="1.3"/><path d="M6 4H15L10.5 8Z" fill="#4010e0"/><path d="M10 9L6 6V8H1V10H6V12Z" fill="#4010e0"/></svg>
<svg style="left:1013px;top:77px" width="17" height="15" viewBox="0 0 17 15" shape-rendering="crispEdges"><path d="M0 13.5H5.5V0.5H16" stroke="#00802a" fill="none" stroke-width="1.3"/><path d="M1 7H10L5.5 3Z" fill="#4010e0"/><path d="M6 9L10 6V8H15V10H10V12Z" fill="#4010e0"/></svg>
<svg style="left:1035px;top:77px" width="17" height="15" viewBox="0 0 17 15" shape-rendering="crispEdges"><path d="M0 13.5H10.5V0.5H16" stroke="#00802a" fill="none" stroke-width="1.3"/><path d="M6 7H15L10.5 3Z" fill="#4010e0"/><path d="M10 9L6 6V8H1V10H6V12Z" fill="#4010e0"/></svg>
<svg style="left:1075px;top:77px" width="17" height="16" viewBox="0 0 17 16"><path d="M1 8 L3 3 Q6 1 9 3 Q12 1 14 2 L12 8 Q9 7 6 8 Q3 9 1 8Z" fill="#7ab8f0" stroke="#2080e0" stroke-width="0.8"/><path d="M13 1 L11 15" stroke="#a06020" stroke-width="1.6"/><circle cx="11.5" cy="12.5" r="3.5" fill="#50a040"/><path d="M11.5 10.5V14.5M9.5 12.5H13.5" stroke="#fff" stroke-width="1.2"/></svg>
<svg style="left:1093px;top:84px" width="6" height="4" viewBox="0 0 6 4" shape-rendering="crispEdges"><path d="M0 0H5L2.5 3Z" fill="#000"/></svg>
<svg style="left:1104px;top:77px" width="17" height="16" viewBox="0 0 17 16"><path d="M1 8 L3 3 Q6 1 9 3 Q12 1 14 2 L12 8 Q9 7 6 8 Q3 9 1 8Z" fill="#7ab8f0" stroke="#2080e0" stroke-width="0.8"/><path d="M13 1 L11 15" stroke="#a06020" stroke-width="1.6"/><circle cx="12" cy="12.5" r="3.5" fill="#e05010"/><path d="M10 12.5H14" stroke="#fff" stroke-width="1.4"/></svg>
<svg style="left:1126px;top:77px" width="17" height="16" viewBox="0 0 17 16"><path d="M1 8 L3 3 Q6 1 9 3 Q12 1 14 2 L12 8 Q9 7 6 8 Q3 9 1 8Z" fill="#7ab8f0" stroke="#2080e0" stroke-width="0.8"/><path d="M13 1 L11 15" stroke="#a06020" stroke-width="1.6"/><path d="M5 15 L14 5 L16 7 L7 16Z" fill="#f0d040" stroke="#b08020" stroke-width="0.8"/></svg>
<svg style="left:1148px;top:77px" width="17" height="16" viewBox="0 0 17 16"><path d="M1 8 L3 3 Q6 1 9 3 Q12 1 14 2 L12 8 Q9 7 6 8 Q3 9 1 8Z" fill="#7ab8f0" stroke="#2080e0" stroke-width="0.8"/><path d="M13 1 L11 15" stroke="#a06020" stroke-width="1.6"/><path d="M7 10H11V7L16 11.5L11 16V13H7Z" fill="#50a040" stroke="#308020" stroke-width="0.6"/></svg>
<svg style="left:1191px;top:78px" width="17" height="14" viewBox="0 0 17 14" shape-rendering="crispEdges"><path d="M0 1H4Q6 1 6 4Q6 7 3 7Q6 7 6 10Q6 13 3 13H0" fill="none" stroke="#000" stroke-width="2"/><path d="M7 7L11 3V5H16V9H11V11Z" fill="#1080f0"/></svg>
<div class="a" style="left:1215px;top:79px;width:1px;height:16px;background:repeating-linear-gradient(#333 0 1px,transparent 1px 2px)"></div>
<svg style="left:1221px;top:77px" width="17" height="17" viewBox="0 0 17 17"><path d="M2 4 L6 1 H15 L11 4 H8 L4 7 H13" fill="none" stroke="#20c0d0" stroke-width="2.2"/><path d="M2 9 Q2 6 5 6" stroke="#000" fill="none"/><circle cx="4.5" cy="12" r="3" fill="none" stroke="#2020a0" stroke-width="1.5"/><rect x="9" y="8" width="7" height="8" fill="#f0f000" stroke="#000" stroke-width="0.6"/><path d="M10 10H15M10 12H15M10 14H15" stroke="#000"/></svg>
<svg style="left:15px;top:108px" width="16" height="16" viewBox="0 0 16 16"><path d="M9 9 L14.5 14.5" stroke="#0000c0" stroke-width="3"/><path d="M9.5 9.5 L14 14" stroke="#8090ff" stroke-width="0.8"/><circle cx="6" cy="6" r="5.2" fill="#fff" stroke="#000" stroke-width="1.3"/><path d="M6 3V9M3 6H9" stroke="#000" stroke-width="1.8"/></svg>
<svg style="left:37px;top:108px" width="16" height="16" viewBox="0 0 16 16"><path d="M9 9 L14.5 14.5" stroke="#0000c0" stroke-width="3"/><path d="M9.5 9.5 L14 14" stroke="#8090ff" stroke-width="0.8"/><circle cx="6" cy="6" r="5.2" fill="#fff" stroke="#000" stroke-width="1.3"/><path d="M3 6H9" stroke="#000" stroke-width="1.8"/></svg>
<svg style="left:59px;top:108px" width="16" height="16" viewBox="0 0 16 16"><path d="M9 9 L14.5 14.5" stroke="#0000c0" stroke-width="3"/><path d="M9.5 9.5 L14 14" stroke="#8090ff" stroke-width="0.8"/><circle cx="6" cy="6" r="5.2" fill="#003c80" stroke="#000" stroke-width="1.3"/><path d="M3 4 Q4 2.5 6 2.5" stroke="#aac" fill="none"/></svg>
<svg style="left:80px;top:108px" width="16" height="16" viewBox="0 0 16 16"><rect x="0.5" y="11.5" width="10" height="3" fill="none" stroke="#40d0f0"/><path d="M9 9 L14.5 14.5" stroke="#0000c0" stroke-width="3"/><path d="M9.5 9.5 L14 14" stroke="#8090ff" stroke-width="0.8"/><circle cx="6" cy="6" r="5.2" fill="#fff" stroke="#000" stroke-width="1.3"/><path d="M6 3V9M3 6H9" stroke="#000" stroke-width="1.8"/></svg>
<svg style="left:102px;top:108px" width="17" height="17" viewBox="0 0 17 17"><path d="M0.5 1H8 M0.5 1V10H6" stroke="#0000a0" fill="none" stroke-dasharray="1 1"/><path d="M8 1 L10 3" stroke="#0000a0" stroke-dasharray="1 1"/><path d="M6 6 L10 4 L13 8 L10 11 L7 9Z" fill="#c8c8c8" stroke="#555" stroke-width="0.6"/><path d="M11 10 L15.5 15" stroke="#0000c0" stroke-dasharray="1 1" stroke-width="1.6"/></svg>
<div class="a" style="left:142px;top:108px;width:20px;height:20px;background:#fff;border-top:1px solid #000;border-left:1px solid #000;border-right:1px solid #f8f8f8;border-bottom:1px solid #f8f8f8"></div>
<svg style="left:145px;top:111px" width="15" height="15" viewBox="0 0 15 15" shape-rendering="crispEdges"><path d="M7.5 0V13M0 13.5H15" stroke="#108030" stroke-width="1.2"/></svg>
<div class="a" style="left:168px;top:108px;width:20px;height:20px;background:#f0f0f0;border-top:1px solid #fff;border-left:1px solid #fff;border-right:1px solid #888;border-bottom:1px solid #888"></div>
<svg style="left:170px;top:110px" width="16" height="16" viewBox="0 0 16 16" shape-rendering="crispEdges"><rect x="4" y="0" width="8" height="16" fill="#10107a"/><path d="M0 14.5H6.5V1.5H9.5V14.5H16" stroke="#109030" fill="none"/></svg>
<div class="a" style="left:194px;top:108px;width:20px;height:20px;background:#f0f0f0;border-top:1px solid #fff;border-left:1px solid #fff;border-right:1px solid #888;border-bottom:1px solid #888"></div>
<svg style="left:196px;top:110px" width="16" height="16" viewBox="0 0 16 16" shape-rendering="crispEdges"><rect x="1" y="0" width="14" height="16" fill="#004808"/><path d="M0 14.5H3.5V1.5H6.5V14.5H9.5V1.5H12.5V14.5H16" stroke="#109030" fill="none"/></svg>
<div class="a" style="left:222px;top:111px;width:1px;height:16px;background:repeating-linear-gradient(#333 0 1px,transparent 1px 2px)"></div>
<div class="a" style="left:231px;top:110px;width:16px;height:16px;background:repeating-conic-gradient(#1a1a90 0 25%,#d8d8f0 0 50%) 0 0/2px 2px"></div>
<div class="a" style="left:238px;top:110px;width:2px;height:16px;background:#30a040;opacity:0.6"></div>
<div class="a" style="left:258px;top:110px;width:4px;height:16px;background:repeating-conic-gradient(#1a1a90 0 25%,transparent 0 50%) 0 0/2px 2px"></div>
<svg style="left:254px;top:110px" width="15" height="16" viewBox="0 0 15 16" shape-rendering="crispEdges"><path d="M0 15H3M8 1H15" stroke="#009030" stroke-dasharray="1 1" fill="none"/><path d="M3.5 0V16" stroke="#f0e000" stroke-dasharray="1 1"/><path d="M5.5 1V15" stroke="#109040" stroke-dasharray="1 1"/></svg>
<svg style="left:276px;top:110px" width="15" height="16" viewBox="0 0 15 16" shape-rendering="crispEdges"><path d="M0 15H6V1H15" stroke="#009030" stroke-dasharray="1 1" fill="none"/></svg>
<svg style="left:298px;top:110px" width="15" height="16" viewBox="0 0 15 16" shape-rendering="crispEdges"><path d="M0 15H6M8 1H15" stroke="#009030" stroke-dasharray="1 1" fill="none"/><path d="M6.5 0V16" stroke="#f0e000" stroke-dasharray="1 1"/><path d="M7.5 1V15" stroke="#009030" stroke-dasharray="1 1" stroke-dashoffset="1"/></svg>
<div class="a" style="left:0px;top:134px;width:1319px;height:1px;background:#fff"></div>
<div class="a" style="left:0px;top:135px;width:255px;height:1px;background:#a0a0a0"></div>
<div class="a" style="left:254px;top:135px;width:1px;height:364px;background:#6a6a6a"></div>
<div class="a" style="left:255px;top:135px;width:2px;height:390px;background:#f0f0f0"></div>
<div class="a" style="left:257px;top:135px;width:5px;height:387px;background:#c8c8c8"></div>
<svg style="left:0px;top:136px" width="18" height="18" viewBox="0 0 18 18"><path d="M7.5 2.5H14L16.5 5V12L14.5 14.5H7.5L5.5 11V5.5Z" fill="#fff" stroke="#000" stroke-width="1.1"/><path d="M9 4.5H14M8.5 6.5H13M8.5 8.5H13M8 10.5H12.5M8 12.5H12" stroke="#3a3a80" stroke-width="0.9" stroke-dasharray="1.2 0.6"/><path d="M2 2.5H5M2 4.5H5M1 6.5H4M1 8.5H3M1 10.5H3" stroke="#8888c8" stroke-width="0.9"/><path d="M4.5 10.5L8 14L4.5 17.5L1 14Z" fill="#e8102a" stroke="#000" stroke-width="1.1"/><circle cx="4.5" cy="14" r="0.8" fill="#000"/><path d="M14.5 12.5L17 15L14.5 17.5L12 15Z" fill="#e8102a" stroke="#000" stroke-width="1.1"/></svg>
<div class="t" style="left:20px;top:140px;font-size:11px;color:#000;">sim - Default</div>
<div class="a" style="left:86px;top:144px;width:50px;height:1px;background:#6a6a6a"></div><div class="a" style="left:86px;top:145px;width:50px;height:1px;background:#fff"></div><div class="a" style="left:86px;top:149px;width:50px;height:1px;background:#6a6a6a"></div><div class="a" style="left:86px;top:150px;width:50px;height:1px;background:#fff"></div>
<div class="a" style="left:139px;top:143px;width:18px;height:8px;background:radial-gradient(circle,#333 0.6px,transparent 0.8px) 0 0/3px 3px"></div>
<div class="a" style="left:158px;top:144px;width:49px;height:1px;background:#6a6a6a"></div><div class="a" style="left:158px;top:145px;width:49px;height:1px;background:#fff"></div><div class="a" style="left:158px;top:149px;width:49px;height:1px;background:#6a6a6a"></div><div class="a" style="left:158px;top:150px;width:49px;height:1px;background:#fff"></div>
<div class="a" style="left:207px;top:142px;width:1px;height:3px;background:#6a6a6a"></div>
<div class="a" style="left:207px;top:147px;width:1px;height:3px;background:#6a6a6a"></div>
<div class="a" style="left:211px;top:139px;width:13px;height:13px;border-top:1px solid #fff;border-left:1px solid #fff;border-right:1px solid #6a6a6a;border-bottom:1px solid #6a6a6a"></div>
<svg style="left:212px;top:140px" width="11" height="11" viewBox="0 0 11 11"><path d="M5 1V10M1 5.5H10" stroke="#000" stroke-width="2"/></svg>
<div class="a" style="left:225px;top:139px;width:13px;height:13px;border-top:1px solid #fff;border-left:1px solid #fff;border-right:1px solid #6a6a6a;border-bottom:1px solid #6a6a6a"></div>
<svg style="left:226px;top:140px" width="11" height="11" viewBox="0 0 11 11"><rect x="1" y="4" width="6" height="6" fill="none" stroke="#000"/><path d="M4 7 L9 2 M5 1H10V6" stroke="#000" stroke-width="1.6" fill="none"/></svg>
<div class="a" style="left:239px;top:139px;width:13px;height:13px;border-top:1px solid #fff;border-left:1px solid #fff;border-right:1px solid #6a6a6a;border-bottom:1px solid #6a6a6a"></div>
<svg style="left:240px;top:140px" width="11" height="11" viewBox="0 0 11 11"><path d="M1.5 1.5L9.5 9.5M9.5 1.5L1.5 9.5" stroke="#000" stroke-width="1.6"/></svg>
<div class="a" style="left:0px;top:155px;width:254px;height:1px;background:#6a6a6a"></div>
<div class="a" style="left:0px;top:156px;width:254px;height:16px;background:#f0f0f0"></div>
<div class="a" style="left:0px;top:172px;width:254px;height:1px;background:#6a6a6a"></div>
<div class="a" style="left:0px;top:155px;width:1px;height:343px;background:#6a6a6a"></div>
<div class="a" style="left:10px;top:156px;width:1px;height:16px;background:#6a6a6a"></div>
<div class="a" style="left:11px;top:156px;width:1px;height:16px;background:#fff"></div>
<svg style="left:2px;top:161px" width="7" height="6" viewBox="0 0 7 6" shape-rendering="crispEdges"><path d="M0 0H7L3.5 6Z" fill="#555"/></svg>
<div class="t" style="left:12px;top:160px;font-size:11.3px;color:#000;">Instance</div>
<div class="a" style="left:147px;top:156px;width:1px;height:16px;background:#6a6a6a"></div>
<div class="a" style="left:148px;top:156px;width:1px;height:16px;background:#fff"></div>
<div class="t" style="left:149px;top:160px;font-size:11px;color:#000;">Design unit</div>
<div class="a" style="left:218px;top:156px;width:1px;height:16px;background:#6a6a6a"></div>
<div class="a" style="left:219px;top:156px;width:1px;height:16px;background:#fff"></div>
<div class="t" style="left:220px;top:160px;font-size:11px;color:#000;">Design</div>
<div class="a" style="left:1px;top:173px;width:253px;height:306px;background:#fff"></div>
<div class="a" style="left:1px;top:176px;width:253px;height:16px;background:#3399ff"></div>
<div class="a" style="left:14px;top:184px;width:7px;height:1px;background:#a0a0a0"></div>
<svg style="left:4px;top:179px" width="11" height="11" viewBox="0 0 11 11" shape-rendering="crispEdges"><defs><linearGradient id="pg" x1="0" y1="0" x2="0" y2="1"><stop offset="0" stop-color="#fff"/><stop offset="1" stop-color="#c8d0e0"/></linearGradient></defs><rect x="0.5" y="0.5" width="10" height="10" rx="1.5" fill="url(#pg)" stroke="#9098a8"/><path d="M2.5 5.5H8.5" stroke="#000" stroke-width="1.3"/></svg>
<svg style="left:21px;top:178px" width="13" height="13" viewBox="0 0 13 13" shape-rendering="crispEdges"><rect x="0" y="0" width="13" height="13" fill="#0a6a8a"/><path d="M0 0H13L0 13Z" fill="#a8e4f8"/><rect x="3" y="3" width="7" height="7" fill="#10c0ec"/><path d="M0 13L3 10M10 3L13 0" stroke="#000" stroke-width="1.2"/></svg>
<div class="a" style="left:27px;top:191px;width:1px;height:5px;background:#a0a0a0"></div>
<div class="a" style="left:27px;top:207px;width:1px;height:62px;background:#a0a0a0"></div>
<div class="a" style="left:32px;top:201px;width:7px;height:1px;background:#a0a0a0"></div>
<svg style="left:22px;top:196px" width="11" height="11" viewBox="0 0 11 11" shape-rendering="crispEdges"><defs><linearGradient id="pg" x1="0" y1="0" x2="0" y2="1"><stop offset="0" stop-color="#fff"/><stop offset="1" stop-color="#c8d0e0"/></linearGradient></defs><rect x="0.5" y="0.5" width="10" height="10" rx="1.5" fill="url(#pg)" stroke="#9098a8"/><path d="M2.5 5.5H8.5" stroke="#000" stroke-width="1.3"/><path d="M5.5 2.5V8.5" stroke="#000" stroke-width="1.3"/></svg>
<svg style="left:39px;top:195px" width="13" height="13" viewBox="0 0 13 13" shape-rendering="crispEdges"><rect x="0" y="0" width="13" height="13" fill="#0a6a8a"/><path d="M0 0H13L0 13Z" fill="#a8e4f8"/><rect x="3" y="3" width="7" height="7" fill="#10c0ec"/><path d="M0 13L3 10M10 3L13 0" stroke="#000" stroke-width="1.2"/></svg>
<div class="t" style="left:40px;top:178px;font-size:11px;color:#fff;">PLL_count_test</div>
<div class="t" style="left:147px;top:178px;font-size:11px;color:#fff;">PLL_count_t...</div>
<div class="t" style="left:219px;top:178px;width:35px;overflow:hidden;font-size:11px;color:#fff">Module</div>
<div class="t" style="left:58px;top:195px;font-size:11px;color:#000;">counter_test</div>
<div class="t" style="left:147px;top:195px;font-size:11px;color:#000;">PLL_count</div>
<div class="t" style="left:219px;top:195px;width:35px;overflow:hidden;font-size:11px;color:#000">Module</div>
<div class="t" style="left:58px;top:212px;font-size:11px;color:#000;">#ALWAYS#11</div>
<div class="t" style="left:147px;top:212px;font-size:11px;color:#000;">PLL_count_t...</div>
<div class="t" style="left:219px;top:212px;width:35px;overflow:hidden;font-size:11px;color:#000">Process</div>
<div class="a" style="left:28px;top:218px;width:10px;height:1px;background:#a0a0a0"></div>
<svg style="left:38px;top:210px" width="14" height="14" viewBox="0 0 14 14"><defs><radialGradient id="sg" cx="0.35" cy="0.3" r="0.7"><stop offset="0" stop-color="#e0f8ff"/><stop offset="0.25" stop-color="#40c0ea"/><stop offset="1" stop-color="#1080a8"/></radialGradient></defs><circle cx="7" cy="7" r="6.5" fill="url(#sg)"/><path d="M4 6 Q5 3.5 8 3.5" stroke="#fff" stroke-width="1.2" fill="none"/></svg>
<div class="t" style="left:58px;top:229px;font-size:11px;color:#000;">#INITIAL#15</div>
<div class="t" style="left:147px;top:229px;font-size:11px;color:#000;">PLL_count_t...</div>
<div class="t" style="left:219px;top:229px;width:35px;overflow:hidden;font-size:11px;color:#000">Process</div>
<div class="a" style="left:28px;top:235px;width:10px;height:1px;background:#a0a0a0"></div>
<svg style="left:38px;top:227px" width="14" height="14" viewBox="0 0 14 14"><defs><radialGradient id="sg" cx="0.35" cy="0.3" r="0.7"><stop offset="0" stop-color="#e0f8ff"/><stop offset="0.25" stop-color="#40c0ea"/><stop offset="1" stop-color="#1080a8"/></radialGradient></defs><circle cx="7" cy="7" r="6.5" fill="url(#sg)"/><path d="M4 6 Q5 3.5 8 3.5" stroke="#fff" stroke-width="1.2" fill="none"/></svg>
<div class="t" style="left:58px;top:246px;font-size:11px;color:#000;">#ALWAYS#24</div>
<div class="t" style="left:147px;top:246px;font-size:11px;color:#000;">PLL_count_t...</div>
<div class="t" style="left:219px;top:246px;width:35px;overflow:hidden;font-size:11px;color:#000">Process</div>
<div class="a" style="left:28px;top:252px;width:10px;height:1px;background:#a0a0a0"></div>
<svg style="left:38px;top:244px" width="14" height="14" viewBox="0 0 14 14"><defs><radialGradient id="sg" cx="0.35" cy="0.3" r="0.7"><stop offset="0" stop-color="#e0f8ff"/><stop offset="0.25" stop-color="#40c0ea"/><stop offset="1" stop-color="#1080a8"/></radialGradient></defs><circle cx="7" cy="7" r="6.5" fill="url(#sg)"/><path d="M4 6 Q5 3.5 8 3.5" stroke="#fff" stroke-width="1.2" fill="none"/></svg>
<div class="t" style="left:58px;top:263px;font-size:11px;color:#000;">#ALWAYS#33</div>
<div class="t" style="left:147px;top:263px;font-size:11px;color:#000;">PLL_count_t...</div>
<div class="t" style="left:219px;top:263px;width:35px;overflow:hidden;font-size:11px;color:#000">Process</div>
<div class="a" style="left:28px;top:269px;width:10px;height:1px;background:#a0a0a0"></div>
<svg style="left:38px;top:261px" width="14" height="14" viewBox="0 0 14 14"><defs><radialGradient id="sg" cx="0.35" cy="0.3" r="0.7"><stop offset="0" stop-color="#e0f8ff"/><stop offset="0.25" stop-color="#40c0ea"/><stop offset="1" stop-color="#1080a8"/></radialGradient></defs><circle cx="7" cy="7" r="6.5" fill="url(#sg)"/><path d="M4 6 Q5 3.5 8 3.5" stroke="#fff" stroke-width="1.2" fill="none"/></svg>
<div class="t" style="left:40px;top:280px;font-size:11px;color:#000;">#vsim_capacity#</div>
<div class="t" style="left:147px;top:280px;font-size:11px;color:#000;"></div>
<div class="t" style="left:219px;top:280px;width:35px;overflow:hidden;font-size:11px;color:#000">Capacity</div>
<svg style="left:19px;top:278px" width="16" height="16" viewBox="0 0 16 16"><path d="M1 0V15H16" stroke="#0000c0" stroke-width="1.5" fill="none"/><path d="M3 8 Q8 2 13 8" stroke="#e02020" stroke-width="2" fill="none"/><path d="M3 13 Q8 7 14 13" stroke="#20b020" stroke-width="2" fill="none"/><path d="M6 4 L14 10 M14 2 L8 8" stroke="#2080e0" stroke-width="1.5"/></svg>
<div class="a" style="left:1px;top:479px;width:253px;height:19px;background:repeating-conic-gradient(#e8e8e8 0 25%,#f8f8f8 0 50%) 0 0/2px 2px"></div>
<div class="a" style="left:1px;top:480px;width:16px;height:17px;background:#f0f0f0;border-top:1px solid #fff;border-left:1px solid #fff;border-right:1px solid #888;border-bottom:1px solid #888"></div>
<svg style="left:6px;top:485px" width="4" height="7" viewBox="0 0 4 7" shape-rendering="crispEdges"><path d="M4 0V7L0 3.5Z" fill="#000"/></svg>
<div class="a" style="left:17px;top:480px;width:41px;height:17px;background:#f0f0f0;border-top:1px solid #fff;border-left:1px solid #fff;border-right:1px solid #888;border-bottom:1px solid #888"></div>
<div class="a" style="left:238px;top:480px;width:16px;height:17px;background:#f0f0f0;border-top:1px solid #fff;border-left:1px solid #fff;border-right:1px solid #888;border-bottom:1px solid #888"></div>
<svg style="left:244px;top:485px" width="4" height="7" viewBox="0 0 4 7" shape-rendering="crispEdges"><path d="M0 0V7L4 3.5Z" fill="#000"/></svg>
<div class="a" style="left:0px;top:498px;width:234px;height:23px;background:#f0f0f0"></div>
<div class="a" style="left:234px;top:497px;width:22px;height:24px;background:#c8c8c8"></div>
<div class="a" style="left:0px;top:499px;width:234px;height:1px;background:#000"></div>
<div class="a" style="left:0px;top:500px;width:62px;height:21px;background:#c8c8c8;border-left:1px solid #c8c8c8;border-right:1px solid #000;border-bottom:1px solid #000;border-radius:0 0 2px 2px"></div><svg style="left:3px;top:500px" width="18" height="17" viewBox="0 0 18 17"><path d="M2 15.5H16" stroke="#000" stroke-width="1.6"/><path d="M2.5 15 L5.5 7 M15.5 15 L12.8 6" stroke="#000" stroke-width="1.2"/><path d="M8 0.5V3" stroke="#000"/><rect x="5.2" y="5" width="2" height="10" fill="#10e0a0" stroke="#000" stroke-width="0.6"/><rect x="7.2" y="2.5" width="2" height="12.5" fill="#e01080" stroke="#000" stroke-width="0.6"/><rect x="9.2" y="5" width="3" height="10" fill="#30a8f8" stroke="#000" stroke-width="0.6"/><rect x="12.6" y="4" width="2" height="11" fill="#f8f000" stroke="#000" stroke-width="0.6"/></svg><div class="t" style="left:22px;top:504px;font-size:11px;color:#000;">Library</div>
<div class="a" style="left:62px;top:500px;width:64px;height:21px;background:#c8c8c8;border-left:1px solid #000;border-right:1px solid #000;border-bottom:1px solid #000;border-radius:0 0 2px 2px"></div><svg style="left:67px;top:501px" width="15" height="14" viewBox="0 0 15 14" shape-rendering="crispEdges"><rect x="0.5" y="2.5" width="14" height="11" fill="#fff" stroke="#000"/><path d="M1 9H14M1 11H14" stroke="#000" stroke-dasharray="1 1"/><path d="M1 1H14" stroke="#0000a0" stroke-dasharray="1 1" stroke-width="2"/><path d="M4 3V6M10 3V6" stroke="#000080" stroke-width="1.5"/><path d="M2 5L4 8L6 5ZM8 5L10 8L12 5Z" fill="#000080"/></svg><div class="t" style="left:84px;top:504px;font-size:11px;color:#000;">Project</div>
<div class="a" style="left:126px;top:499px;width:45px;height:22px;background:#f0f0f0;border-left:1px solid #fff;border-right:1px solid #000;border-bottom:1px solid #000;border-radius:0 0 2px 2px"></div><svg style="left:129px;top:500px" width="18" height="18" viewBox="0 0 18 18"><path d="M7.5 2.5H14L16.5 5V12L14.5 14.5H7.5L5.5 11V5.5Z" fill="#fff" stroke="#000" stroke-width="1.1"/><path d="M9 4.5H14M8.5 6.5H13M8.5 8.5H13M8 10.5H12.5M8 12.5H12" stroke="#3a3a80" stroke-width="0.9" stroke-dasharray="1.2 0.6"/><path d="M2 2.5H5M2 4.5H5M1 6.5H4M1 8.5H3M1 10.5H3" stroke="#8888c8" stroke-width="0.9"/><path d="M4.5 10.5L8 14L4.5 17.5L1 14Z" fill="#e8102a" stroke="#000" stroke-width="1.1"/><circle cx="4.5" cy="14" r="0.8" fill="#000"/><path d="M14.5 12.5L17 15L14.5 17.5L12 15Z" fill="#e8102a" stroke="#000" stroke-width="1.1"/></svg><div class="t" style="left:148px;top:504px;font-size:11px;color:#000;">sim</div>
<div class="a" style="left:235px;top:500px;width:10px;height:16px;background:#f0f0f0;border-right:1px solid #888;border-bottom:1px solid #888;border-left:1px solid #fff;border-top:1px solid #fff"></div>
<div class="a" style="left:245px;top:500px;width:11px;height:16px;background:#f0f0f0;border-right:1px solid #888;border-bottom:1px solid #888;border-left:1px solid #fff;border-top:1px solid #fff"></div>
<svg style="left:237px;top:504px" width="8" height="9" viewBox="0 0 8 9"><path d="M4 1L1 4.5L4 8M7 1L4 4.5L7 8" stroke="#555" fill="none"/></svg>
<svg style="left:246px;top:504px" width="8" height="9" viewBox="0 0 8 9"><path d="M1 1L4 4.5L1 8M4 1L7 4.5L4 8" stroke="#555" fill="none"/></svg>
<div class="a" style="left:0px;top:521px;width:1319px;height:7px;background:#c8c8c8"></div>
<div class="a" style="left:262px;top:135px;width:1057px;height:1px;background:#a0a0a0"></div>
<div class="a" style="left:262px;top:135px;width:1px;height:386px;background:#a8a8a8"></div>
<div class="a" style="left:263px;top:136px;width:1px;height:385px;background:#fff"></div>
<div class="a" style="left:264px;top:136px;width:1055px;height:385px;background:#f0f0f0"></div>
<div class="a" style="left:264px;top:137px;width:1055px;height:18px;background:#9cb4d0"></div>
<svg style="left:266px;top:139px" width="16" height="16" viewBox="0 0 16 16" shape-rendering="crispEdges"><rect x="0.5" y="0.5" width="14" height="14" fill="#000" stroke="#404040"/><rect x="1" y="1" width="13" height="3" fill="#fff"/><path d="M1 7H4V10H8V7H13M1 11H4M7 12H13" stroke="#00c040" fill="none"/><path d="M6.5 4V14" stroke="#20e0f0"/><path d="M8 12H13" stroke="#4010e0" stroke-width="1.2"/><path d="M15.5 1V15.5H1" stroke="#000" fill="none"/></svg>
<div class="t" style="left:285px;top:141px;font-size:11px;color:#000;">Wave - Default</div>
<div class="a" style="left:363px;top:142px;width:465px;height:2px;background:#c8ecff"></div><div class="a" style="left:363px;top:144px;width:465px;height:1px;background:#000"></div><div class="a" style="left:363px;top:147px;width:465px;height:2px;background:#c8ecff"></div><div class="a" style="left:363px;top:149px;width:465px;height:1px;background:#000"></div>
<div class="a" style="left:829px;top:142px;width:21px;height:8px;background:radial-gradient(circle,#222 0.6px,transparent 0.8px) 0 0/3px 3px"></div>
<div class="a" style="left:852px;top:142px;width:463px;height:2px;background:#c8ecff"></div><div class="a" style="left:852px;top:144px;width:463px;height:1px;background:#000"></div><div class="a" style="left:852px;top:147px;width:463px;height:2px;background:#c8ecff"></div><div class="a" style="left:852px;top:149px;width:463px;height:1px;background:#000"></div>
<div class="a" style="left:1315px;top:142px;width:1px;height:3px;background:#000"></div>
<div class="a" style="left:1315px;top:147px;width:1px;height:3px;background:#000"></div>
<div class="a" style="left:263px;top:155px;width:1056px;height:2px;background:#fff"></div>
<div class="a" style="left:263px;top:155px;width:3px;height:339px;background:#fff"></div>
<div class="a" style="left:266px;top:157px;width:1053px;height:336px;background:#808080"></div>
<div class="a" style="left:266px;top:157px;width:1px;height:336px;background:#6a6a6a"></div>
<div class="a" style="left:266px;top:157px;width:350px;height:1px;background:#6a6a6a"></div>
<svg style="left:276px;top:158px" width="17" height="18" viewBox="0 0 17 18"><path d="M0 6.5L6 0.5L10 4.5L8 6.5H0Z" fill="#e030f0" stroke="#8010a0" stroke-width="0.8"/><rect x="9.5" y="5.5" width="6.5" height="8" fill="#10b040" stroke="#108030" stroke-width="0.8"/><circle cx="10" cy="6.5" r="3.6" fill="#10e8f8" stroke="#5090b0" stroke-width="0.6"/><path d="M5.5 6L11 11.5L5.5 17L0 11.5Z" fill="#0a5af0"/></svg>
<svg style="left:294px;top:167px" width="6" height="4" viewBox="0 0 6 4" shape-rendering="crispEdges"><path d="M0 0H5L2.5 3Z" fill="#000"/></svg>
<div class="t" style="left:586px;top:162px;font-size:11px;color:#fff;">Msgs</div>
<div class="a" style="left:425px;top:157px;width:1px;height:336px;background:#6e6e6e"></div>
<div class="a" style="left:426px;top:157px;width:2px;height:336px;background:#fff"></div>
<div class="a" style="left:616px;top:157px;width:2px;height:336px;background:#fff"></div>
<div class="a" style="left:267px;top:177px;width:1052px;height:2px;background:#fff"></div>
<div class="a" style="left:267px;top:179px;width:8px;height:251px;background:#fff"></div>
<svg style="left:295px;top:182px" width="15" height="15" viewBox="0 0 15 15"><path d="M7.5 0L15 7.5L7.5 15L0 7.5Z" fill="#0a6ea8"/><path d="M7.5 0L15 7.5L11 7.5L7.5 4Z" fill="#28a8e8"/><path d="M7.5 0L0 7.5L4 7.5L7.5 4Z" fill="#a8e8ff"/><path d="M4 7.5L7.5 4L11 7.5L7.5 11Z" fill="#10c8f8"/><path d="M0 7.5L4 7.5L7.5 11L7.5 15Z" fill="#1890d0"/></svg>
<div class="t" style="left:315px;top:184px;font-size:11px;color:#fff;">/PLL_count_test/kclk</div>
<div class="t" style="left:430px;top:184px;font-size:11px;color:#fff;">-No Data-</div>
<svg style="left:295px;top:199px" width="15" height="15" viewBox="0 0 15 15"><path d="M7.5 0L15 7.5L7.5 15L0 7.5Z" fill="#0a6ea8"/><path d="M7.5 0L15 7.5L11 7.5L7.5 4Z" fill="#28a8e8"/><path d="M7.5 0L0 7.5L4 7.5L7.5 4Z" fill="#a8e8ff"/><path d="M4 7.5L7.5 4L11 7.5L7.5 11Z" fill="#10c8f8"/><path d="M0 7.5L4 7.5L7.5 11L7.5 15Z" fill="#1890d0"/></svg>
<div class="t" style="left:315px;top:201px;font-size:11px;color:#fff;">/PLL_count_test/rst</div>
<div class="t" style="left:430px;top:201px;font-size:11px;color:#fff;">-No Data-</div>
<svg style="left:295px;top:216px" width="15" height="15" viewBox="0 0 15 15"><path d="M7.5 0L15 7.5L7.5 15L0 7.5Z" fill="#0a6ea8"/><path d="M7.5 0L15 7.5L11 7.5L7.5 4Z" fill="#28a8e8"/><path d="M7.5 0L0 7.5L4 7.5L7.5 4Z" fill="#a8e8ff"/><path d="M4 7.5L7.5 4L11 7.5L7.5 11Z" fill="#10c8f8"/><path d="M0 7.5L4 7.5L7.5 11L7.5 15Z" fill="#1890d0"/></svg>
<div class="t" style="left:315px;top:218px;font-size:11px;color:#fff;">/PLL_count_test/dnup</div>
<div class="t" style="left:430px;top:218px;font-size:11px;color:#fff;">-No Data-</div>
<svg style="left:295px;top:233px" width="15" height="15" viewBox="0 0 15 15"><path d="M7.5 0L15 7.5L7.5 15L0 7.5Z" fill="#0a6ea8"/><path d="M7.5 0L15 7.5L11 7.5L7.5 4Z" fill="#28a8e8"/><path d="M7.5 0L0 7.5L4 7.5L7.5 4Z" fill="#a8e8ff"/><path d="M4 7.5L7.5 4L11 7.5L7.5 11Z" fill="#10c8f8"/><path d="M0 7.5L4 7.5L7.5 11L7.5 15Z" fill="#1890d0"/></svg>
<div class="t" style="left:315px;top:235px;font-size:11px;color:#fff;">/PLL_count_test/en...</div>
<div class="t" style="left:430px;top:235px;font-size:11px;color:#fff;">-No Data-</div>
<div class="a" style="left:275px;top:249px;width:150px;height:16px;background:#fff"></div>
<div class="a" style="left:428px;top:249px;width:187px;height:16px;background:#fff"></div>
<svg style="left:280px;top:253px" width="11" height="11" viewBox="0 0 11 11" shape-rendering="crispEdges"><defs><linearGradient id="pg" x1="0" y1="0" x2="0" y2="1"><stop offset="0" stop-color="#fff"/><stop offset="1" stop-color="#c8d0e0"/></linearGradient></defs><rect x="0.5" y="0.5" width="10" height="10" rx="1.5" fill="url(#pg)" stroke="#9098a8"/><path d="M2.5 5.5H8.5" stroke="#000" stroke-width="1.3"/><path d="M5.5 2.5V8.5" stroke="#000" stroke-width="1.3"/></svg>
<div class="a" style="left:291px;top:258px;width:4px;height:1px;background:#a0a0a0"></div>
<svg style="left:295px;top:250px" width="15" height="15" viewBox="0 0 15 15"><path d="M7.5 0L15 7.5L7.5 15L0 7.5Z" fill="#0a6ea8"/><path d="M7.5 0L15 7.5L11 7.5L7.5 4Z" fill="#28a8e8"/><path d="M7.5 0L0 7.5L4 7.5L7.5 4Z" fill="#a8e8ff"/><path d="M4 7.5L7.5 4L11 7.5L7.5 11Z" fill="#10c8f8"/><path d="M0 7.5L4 7.5L7.5 11L7.5 15Z" fill="#1890d0"/></svg>
<div class="t" style="left:315px;top:252px;font-size:11px;color:#000;">/PLL_count_test/km...</div>
<div class="t" style="left:430px;top:252px;font-size:11px;color:#000;">-No Data-</div>
<svg style="left:295px;top:267px" width="15" height="15" viewBox="0 0 15 15"><path d="M7.5 0L15 7.5L7.5 15L0 7.5Z" fill="#0a6ea8"/><path d="M7.5 0L15 7.5L11 7.5L7.5 4Z" fill="#28a8e8"/><path d="M7.5 0L0 7.5L4 7.5L7.5 4Z" fill="#a8e8ff"/><path d="M4 7.5L7.5 4L11 7.5L7.5 11Z" fill="#10c8f8"/><path d="M0 7.5L4 7.5L7.5 11L7.5 15Z" fill="#1890d0"/></svg>
<div class="t" style="left:315px;top:269px;font-size:11px;color:#fff;">/PLL_count_test/bo...</div>
<div class="t" style="left:430px;top:269px;font-size:11px;color:#fff;">-No Data-</div>
<svg style="left:295px;top:284px" width="15" height="15" viewBox="0 0 15 15"><path d="M7.5 0L15 7.5L7.5 15L0 7.5Z" fill="#0a6ea8"/><path d="M7.5 0L15 7.5L11 7.5L7.5 4Z" fill="#28a8e8"/><path d="M7.5 0L0 7.5L4 7.5L7.5 4Z" fill="#a8e8ff"/><path d="M4 7.5L7.5 4L11 7.5L7.5 11Z" fill="#10c8f8"/><path d="M0 7.5L4 7.5L7.5 11L7.5 15Z" fill="#1890d0"/></svg>
<div class="t" style="left:315px;top:286px;font-size:11px;color:#fff;">/PLL_count_test/carry</div>
<div class="t" style="left:430px;top:286px;font-size:11px;color:#fff;">-No Data-</div>
<svg style="left:280px;top:304px" width="11" height="11" viewBox="0 0 11 11" shape-rendering="crispEdges"><defs><linearGradient id="pg" x1="0" y1="0" x2="0" y2="1"><stop offset="0" stop-color="#fff"/><stop offset="1" stop-color="#c8d0e0"/></linearGradient></defs><rect x="0.5" y="0.5" width="10" height="10" rx="1.5" fill="url(#pg)" stroke="#9098a8"/><path d="M2.5 5.5H8.5" stroke="#000" stroke-width="1.3"/><path d="M5.5 2.5V8.5" stroke="#000" stroke-width="1.3"/></svg>
<div class="a" style="left:291px;top:309px;width:4px;height:1px;background:#a0a0a0"></div>
<svg style="left:295px;top:301px" width="15" height="15" viewBox="0 0 15 15"><path d="M7.5 0L15 7.5L7.5 15L0 7.5Z" fill="#0a6ea8"/><path d="M7.5 0L15 7.5L11 7.5L7.5 4Z" fill="#28a8e8"/><path d="M7.5 0L0 7.5L4 7.5L7.5 4Z" fill="#a8e8ff"/><path d="M4 7.5L7.5 4L11 7.5L7.5 11Z" fill="#10c8f8"/><path d="M0 7.5L4 7.5L7.5 11L7.5 15Z" fill="#1890d0"/></svg>
<div class="t" style="left:315px;top:303px;font-size:11px;color:#fff;">/PLL_count_test/kstop</div>
<div class="t" style="left:430px;top:303px;font-size:11px;color:#fff;">-No Data-</div>
<div class="a" style="left:618px;top:157px;width:701px;height:20px;background:#000"></div>
<div class="a" style="left:618px;top:179px;width:701px;height:251px;background:#000"></div>
<div class="a" style="left:681px;top:179px;width:1px;height:251px;background:#8a8a8a"></div>
<div class="a" style="left:744px;top:179px;width:1px;height:251px;background:#8a8a8a"></div>
<div class="a" style="left:807px;top:179px;width:1px;height:251px;background:#8a8a8a"></div>
<div class="a" style="left:870px;top:179px;width:1px;height:251px;background:#8a8a8a"></div>
<div class="a" style="left:933px;top:179px;width:1px;height:251px;background:#8a8a8a"></div>
<div class="a" style="left:996px;top:179px;width:1px;height:251px;background:#8a8a8a"></div>
<div class="a" style="left:1059px;top:179px;width:1px;height:251px;background:#8a8a8a"></div>
<div class="a" style="left:1123px;top:179px;width:1px;height:251px;background:#8a8a8a"></div>
<div class="a" style="left:1186px;top:179px;width:1px;height:251px;background:#8a8a8a"></div>
<div class="a" style="left:1249px;top:179px;width:1px;height:251px;background:#8a8a8a"></div>
<div class="a" style="left:1312px;top:179px;width:1px;height:251px;background:#8a8a8a"></div>
<div class="a" style="left:267px;top:430px;width:158px;height:3px;background:#fff"></div>
<div class="a" style="left:428px;top:430px;width:188px;height:3px;background:#fff"></div>
<div class="a" style="left:618px;top:430px;width:701px;height:3px;background:#fff"></div>
<div class="a" style="left:642px;top:159px;width:3px;height:18px;background:#ffd800"></div>
<div class="a" style="left:642px;top:180px;width:3px;height:250px;background:#ffd800"></div>
<div class="a" style="left:267px;top:430px;width:158px;height:1px;background:#6e6e6e"></div>
<div class="a" style="left:428px;top:430px;width:188px;height:1px;background:#6e6e6e"></div>
<div class="a" style="left:267px;top:431px;width:158px;height:2px;background:#fff"></div>
<div class="a" style="left:428px;top:431px;width:188px;height:2px;background:#fff"></div>
<div class="a" style="left:267px;top:433px;width:158px;height:40px;background:#808080"></div>
<div class="a" style="left:428px;top:433px;width:188px;height:40px;background:#808080"></div>
<svg style="left:275px;top:438px" width="12" height="12" viewBox="0 0 12 12"><path d="M1 7 L3 1 L5 7 M2 5H4M5.5 1 L7.5 7 L9.5 1" stroke="#505050" stroke-width="1.1" fill="none"/><path d="M0.5 9.5H11.5" stroke="#3c80e0" stroke-width="1.3"/><path d="M2 8L0.5 9.5L2 11M10 8L11.5 9.5L10 11" stroke="#3c80e0" fill="none"/></svg>
<svg style="left:287px;top:439px" width="12" height="11" viewBox="0 0 12 11"><rect x="0.5" y="0.5" width="11" height="10" fill="#d0dcf0" stroke="#5a88c8"/><rect x="0.5" y="0.5" width="11" height="2.5" fill="#4a7cc8"/><path d="M2 5H6M2 7H5M2 9H6" stroke="#5a88c8"/><path d="M5 10 L10 6" stroke="#5a88e0" stroke-width="2"/></svg>
<svg style="left:300px;top:439px" width="11" height="11" viewBox="0 0 11 11"><circle cx="5.5" cy="5.5" r="5" fill="#58b858" stroke="#a8dca8"/><path d="M5.5 2.5V8.5M2.5 5.5H8.5" stroke="#fff" stroke-width="1.8"/></svg>
<div class="t" style="left:393px;top:439px;font-size:11px;color:#fff;">Now</div>
<div class="t" style="left:0px;top:439px;font-size:11px;color:#fff;width:605px;text-align:right">0 ps</div>
<svg style="left:279px;top:457px" width="11" height="13" viewBox="0 0 11 13"><path d="M2.5 6V3.5Q2.5 0.8 5.5 0.8Q8.5 0.8 8.5 3.5" stroke="#909090" fill="none" stroke-width="1.3"/><rect x="0.5" y="5.5" width="10" height="7" fill="#f0c848" stroke="#d09020" stroke-width="0.8"/><rect x="4" y="7.5" width="3" height="3" fill="#c09030"/></svg>
<svg style="left:291px;top:456px" width="12" height="13" viewBox="0 0 12 13"><path d="M1.5 11.5 L7 6" stroke="#5a88e0" stroke-width="2.6" stroke-linecap="round"/><path d="M6.5 6.5 Q5.5 2 9 1 L10.5 1.5 L9 3.5 L10 4.5 L11.5 3 Q12 6 8 7" stroke="#b8c0cc" fill="none" stroke-width="1.2"/></svg>
<svg style="left:304px;top:458px" width="11" height="11" viewBox="0 0 11 11"><circle cx="5.5" cy="5.5" r="5" fill="#e05050" stroke="#f0a8a8"/><path d="M2.5 5.5H8.5" stroke="#fff" stroke-width="1.8"/></svg>
<div class="a" style="left:315px;top:455px;width:110px;height:17px;background:#fff"></div>
<div class="t" style="left:0px;top:459px;font-size:11px;color:#000;width:415px;text-align:right">Cursor 1</div>
<div class="a" style="left:428px;top:455px;width:187px;height:17px;background:#fff"></div>
<div class="t" style="left:0px;top:459px;font-size:11px;color:#000;width:605px;text-align:right">800 ps</div>
<div class="a" style="left:267px;top:473px;width:158px;height:2px;background:#fff"></div>
<div class="a" style="left:428px;top:473px;width:188px;height:2px;background:#fff"></div>
<div class="a" style="left:618px;top:431px;width:701px;height:2px;background:#fff"></div>
<div class="a" style="left:618px;top:433px;width:701px;height:22px;background:#000"></div>
<div class="a" style="left:618px;top:455px;width:701px;height:1px;background:#8a8a8a"></div>
<div class="a" style="left:618px;top:456px;width:701px;height:17px;background:#000"></div>
<div class="a" style="left:618px;top:473px;width:701px;height:2px;background:#fff"></div>
<div class="a" style="left:633px;top:436px;width:1px;height:5px;background:#00e000"></div>
<div class="a" style="left:649px;top:436px;width:1px;height:5px;background:#00e000"></div>
<div class="a" style="left:665px;top:436px;width:1px;height:5px;background:#00e000"></div>
<div class="a" style="left:681px;top:436px;width:1px;height:5px;background:#00e000"></div>
<div class="a" style="left:697px;top:433px;width:1px;height:8px;background:#00e000"></div>
<div class="a" style="left:712px;top:436px;width:1px;height:5px;background:#00e000"></div>
<div class="a" style="left:728px;top:436px;width:1px;height:5px;background:#00e000"></div>
<div class="a" style="left:744px;top:436px;width:1px;height:5px;background:#00e000"></div>
<div class="a" style="left:760px;top:436px;width:1px;height:5px;background:#00e000"></div>
<div class="a" style="left:775px;top:433px;width:1px;height:8px;background:#00e000"></div>
<div class="a" style="left:791px;top:436px;width:1px;height:5px;background:#00e000"></div>
<div class="a" style="left:807px;top:436px;width:1px;height:5px;background:#00e000"></div>
<div class="a" style="left:823px;top:436px;width:1px;height:5px;background:#00e000"></div>
<div class="a" style="left:839px;top:436px;width:1px;height:5px;background:#00e000"></div>
<div class="a" style="left:854px;top:433px;width:1px;height:8px;background:#00e000"></div>
<div class="a" style="left:870px;top:436px;width:1px;height:5px;background:#00e000"></div>
<div class="a" style="left:886px;top:436px;width:1px;height:5px;background:#00e000"></div>
<div class="a" style="left:902px;top:436px;width:1px;height:5px;background:#00e000"></div>
<div class="a" style="left:917px;top:436px;width:1px;height:5px;background:#00e000"></div>
<div class="a" style="left:933px;top:433px;width:1px;height:8px;background:#00e000"></div>
<div class="a" style="left:949px;top:436px;width:1px;height:5px;background:#00e000"></div>
<div class="a" style="left:965px;top:436px;width:1px;height:5px;background:#00e000"></div>
<div class="a" style="left:981px;top:436px;width:1px;height:5px;background:#00e000"></div>
<div class="a" style="left:996px;top:436px;width:1px;height:5px;background:#00e000"></div>
<div class="a" style="left:1012px;top:433px;width:1px;height:8px;background:#00e000"></div>
<div class="a" style="left:1028px;top:436px;width:1px;height:5px;background:#00e000"></div>
<div class="a" style="left:1044px;top:436px;width:1px;height:5px;background:#00e000"></div>
<div class="a" style="left:1059px;top:436px;width:1px;height:5px;background:#00e000"></div>
<div class="a" style="left:1075px;top:436px;width:1px;height:5px;background:#00e000"></div>
<div class="a" style="left:1091px;top:433px;width:1px;height:8px;background:#00e000"></div>
<div class="a" style="left:1107px;top:436px;width:1px;height:5px;background:#00e000"></div>
<div class="a" style="left:1123px;top:436px;width:1px;height:5px;background:#00e000"></div>
<div class="a" style="left:1138px;top:436px;width:1px;height:5px;background:#00e000"></div>
<div class="a" style="left:1154px;top:436px;width:1px;height:5px;background:#00e000"></div>
<div class="a" style="left:1170px;top:433px;width:1px;height:8px;background:#00e000"></div>
<div class="a" style="left:1186px;top:436px;width:1px;height:5px;background:#00e000"></div>
<div class="a" style="left:1201px;top:436px;width:1px;height:5px;background:#00e000"></div>
<div class="a" style="left:1217px;top:436px;width:1px;height:5px;background:#00e000"></div>
<div class="a" style="left:1233px;top:436px;width:1px;height:5px;background:#00e000"></div>
<div class="a" style="left:1249px;top:433px;width:1px;height:8px;background:#00e000"></div>
<div class="a" style="left:1264px;top:436px;width:1px;height:5px;background:#00e000"></div>
<div class="a" style="left:1280px;top:436px;width:1px;height:5px;background:#00e000"></div>
<div class="a" style="left:1296px;top:436px;width:1px;height:5px;background:#00e000"></div>
<div class="a" style="left:1312px;top:436px;width:1px;height:5px;background:#00e000"></div>
<div class="t" style="left:735px;top:444px;width:80px;text-align:center;font-size:11px;color:#00f000">5000 ps</div>
<div class="t" style="left:893px;top:444px;width:80px;text-align:center;font-size:11px;color:#00f000">10000 ps</div>
<div class="t" style="left:1051px;top:444px;width:80px;text-align:center;font-size:11px;color:#00f000">15000 ps</div>
<div class="t" style="left:1209px;top:444px;width:80px;text-align:center;font-size:11px;color:#00f000">20000 ps</div>
<div class="a" style="left:618px;top:440px;width:20px;height:15px;overflow:hidden"><div class="t" style="left:-10px;top:4px;width:20px;text-align:center;font-size:11px;color:#00f000">0 ps</div></div>
<div class="a" style="left:642px;top:433px;width:3px;height:22px;background:#ffd800"></div>
<div class="a" style="left:625px;top:456px;width:37px;height:17px;border:1px solid #ffd000;background:#000"></div>
<div class="t" style="left:627px;top:460px;font-size:11px;color:#ffd800;">800 ps</div>
<div class="a" style="left:275px;top:476px;width:150px;height:16px;background:#f0f0f0"></div>
<div class="a" style="left:275px;top:476px;width:16px;height:16px;background:#f0f0f0;border-top:1px solid #fff;border-left:1px solid #fff;border-right:1px solid #888;border-bottom:1px solid #888"></div><svg style="left:280px;top:480px" width="5" height="8" viewBox="0 0 5 8" shape-rendering="crispEdges"><path d="M5 0V8L1 4Z" fill="#000"/></svg>
<div class="a" style="left:291px;top:476px;width:113px;height:16px;background:#f0f0f0;border-top:1px solid #fff;border-left:1px solid #fff;border-right:1px solid #888;border-bottom:1px solid #888"></div>
<div class="a" style="left:404px;top:476px;width:4px;height:16px;background:repeating-conic-gradient(#e0e0e0 0 25%,#f8f8f8 0 50%) 0 0/2px 2px"></div>
<div class="a" style="left:408px;top:476px;width:17px;height:16px;background:#f0f0f0;border-top:1px solid #fff;border-left:1px solid #fff;border-right:1px solid #888;border-bottom:1px solid #888"></div><svg style="left:414px;top:480px" width="5" height="8" viewBox="0 0 5 8" shape-rendering="crispEdges"><path d="M0 0V8L4 4Z" fill="#000"/></svg>
<div class="a" style="left:428px;top:476px;width:187px;height:16px;background:repeating-conic-gradient(#e8e8e8 0 25%,#f8f8f8 0 50%) 0 0/2px 2px"></div>
<div class="a" style="left:428px;top:476px;width:16px;height:16px;background:#f0f0f0;border-top:1px solid #fff;border-left:1px solid #fff;border-right:1px solid #888;border-bottom:1px solid #888"></div><svg style="left:433px;top:480px" width="5" height="8" viewBox="0 0 5 8" shape-rendering="crispEdges"><path d="M5 0V8L1 4Z" fill="#a0a0a0"/></svg>
<div class="a" style="left:598px;top:476px;width:17px;height:16px;background:#f0f0f0;border-top:1px solid #fff;border-left:1px solid #fff;border-right:1px solid #888;border-bottom:1px solid #888"></div><svg style="left:604px;top:480px" width="5" height="8" viewBox="0 0 5 8" shape-rendering="crispEdges"><path d="M0 0V8L4 4Z" fill="#a0a0a0"/></svg>
<div class="a" style="left:618px;top:475px;width:701px;height:1px;background:#696969"></div>
<div class="a" style="left:618px;top:476px;width:701px;height:15px;background:#f0f0f0"></div>
<div class="a" style="left:620px;top:476px;width:14px;height:15px;background:#f0f0f0;border-top:1px solid #fff;border-left:1px solid #fff;border-right:1px solid #888;border-bottom:1px solid #888"></div><svg style="left:624px;top:479px" width="5" height="8" viewBox="0 0 5 8" shape-rendering="crispEdges"><path d="M5 0V8L1 4Z" fill="#000"/></svg>
<div class="a" style="left:635px;top:476px;width:684px;height:15px;background:#f0f0f0;border-top:1px solid #fff;border-left:1px solid #fff"></div>
<div class="a" style="left:618px;top:491px;width:701px;height:1px;background:#a0a0a0"></div>
<div class="a" style="left:618px;top:492px;width:701px;height:1px;background:#696969"></div>
<div class="a" style="left:656px;top:478px;width:1px;height:12px;background:#f0c000"></div>
<div class="a" style="left:266px;top:493px;width:1053px;height:1px;background:#6a6a6a"></div>
<div class="a" style="left:263px;top:494px;width:1056px;height:3px;background:#fafafa"></div>
<div class="a" style="left:263px;top:497px;width:1056px;height:1px;background:#a8a8a8"></div>
<div class="a" style="left:263px;top:498px;width:1056px;height:1px;background:#f0f0f0"></div>
<div class="a" style="left:263px;top:500px;width:1056px;height:21px;background:#f0f0f0"></div>
<div class="a" style="left:501px;top:499px;width:818px;height:1px;background:#000"></div>
<div class="a" style="left:263px;top:499px;width:1px;height:1px;background:#000"></div>
<div class="a" style="left:263px;top:499px;width:89px;height:22px;background:#c8c8c8;border-top:1px solid #000;border-left:1px solid #000;border-right:1px solid #000;border-bottom:1px solid #000;border-radius:0 0 4px 4px"></div><svg style="left:270px;top:502px" width="12" height="16" viewBox="0 0 12 16" shape-rendering="crispEdges"><path d="M0.5 0.5H8L11.5 4V15.5H0.5Z" fill="#fff" stroke="#c0c0c0"/><path d="M8 0.5V4H11.5" fill="none" stroke="#c0c0c0"/></svg>
<div class="t" style="left:287px;top:504px;font-size:11px;color:#000;">PLL_count.v</div>
<div class="a" style="left:351px;top:499px;width:93px;height:22px;background:#c8c8c8;border-top:1px solid #000;border-left:1px solid #000;border-right:1px solid #000;border-bottom:1px solid #000;border-radius:0 0 4px 4px"></div><svg style="left:358px;top:502px" width="12" height="16" viewBox="0 0 12 16" shape-rendering="crispEdges"><path d="M0.5 0.5H8L11.5 4V15.5H0.5Z" fill="#fff" stroke="#c0c0c0"/><path d="M8 0.5V4H11.5" fill="none" stroke="#c0c0c0"/></svg>
<div class="t" style="left:376px;top:504px;font-size:11px;color:#000;">count_test.v</div>
<div class="a" style="left:444px;top:499px;width:58px;height:22px;background:#f0f0f0;border-left:1px solid #fff;border-right:1px solid #000;border-bottom:1px solid #000;border-radius:0 0 4px 4px"></div><svg style="left:449px;top:502px" width="16" height="16" viewBox="0 0 16 16" shape-rendering="crispEdges"><rect x="0.5" y="0.5" width="14" height="14" fill="#000" stroke="#404040"/><rect x="1" y="1" width="13" height="3" fill="#fff"/><path d="M1 7H4V10H8V7H13M1 11H4M7 12H13" stroke="#00c040" fill="none"/><path d="M6.5 4V14" stroke="#20e0f0"/><path d="M8 12H13" stroke="#4010e0" stroke-width="1.2"/><path d="M15.5 1V15.5H1" stroke="#000" fill="none"/></svg>
<div class="t" style="left:468px;top:504px;font-size:11px;color:#000;">Wave</div>
<div class="a" style="left:0px;top:529px;width:1319px;height:18px;background:#f0f0f0"></div>
<div class="a" style="left:0px;top:528px;width:1319px;height:1px;background:#a8a8a8"></div>
<div class="a" style="left:0px;top:529px;width:1319px;height:1px;background:#fff"></div>
<svg style="left:2px;top:531px" width="14" height="15" viewBox="0 0 14 15"><path d="M1 14 V5 Q1 1 7 1 Q13 1 13 5 V14 L10 12 V6 Q10 4 7 4 Q4 4 4 6 V12Z" fill="#707070" stroke="#404040" stroke-width="0.8"/><path d="M4 6H10V12H4Z" fill="#fff" opacity="0.9"/><path d="M2 9H12" stroke="#a0a0a0"/></svg>
<div class="t" style="left:19px;top:534px;font-size:11px;color:#000;">Transcript</div>
<div class="a" style="left:74px;top:536px;width:612px;height:1px;background:#6a6a6a"></div><div class="a" style="left:74px;top:537px;width:612px;height:1px;background:#fff"></div><div class="a" style="left:74px;top:541px;width:612px;height:1px;background:#6a6a6a"></div><div class="a" style="left:74px;top:542px;width:612px;height:1px;background:#fff"></div>
<div class="a" style="left:684px;top:533px;width:22px;height:11px;background:#fff"></div>
<div class="a" style="left:686px;top:534px;width:19px;height:9px;background:radial-gradient(circle,#111 0.6px,transparent 0.9px) 0 0/3px 3px"></div>
<div class="a" style="left:706px;top:536px;width:610px;height:1px;background:#6a6a6a"></div><div class="a" style="left:706px;top:537px;width:610px;height:1px;background:#fff"></div><div class="a" style="left:706px;top:541px;width:610px;height:1px;background:#6a6a6a"></div><div class="a" style="left:706px;top:542px;width:610px;height:1px;background:#fff"></div>
<div class="a" style="left:1316px;top:534px;width:1px;height:3px;background:#6a6a6a"></div>
<div class="a" style="left:1316px;top:539px;width:1px;height:3px;background:#6a6a6a"></div>
<div class="a" style="left:2px;top:547px;width:1317px;height:1px;background:#a0a0a0"></div>
<div class="a" style="left:2px;top:547px;width:2px;height:150px;background:#000"></div>
<div class="a" style="left:4px;top:548px;width:1315px;height:1px;background:#000"></div>
<div class="a" style="left:4px;top:549px;width:1315px;height:148px;background:#fff"></div>
<div class="t" style="left:5px;top:553px;font-size:12.5px;color:#0000ff;font-family:'Liberation Mono',monospace;letter-spacing:-0.5px">#</div>
<div class="t" style="left:152px;top:553px;font-size:12.5px;color:#0000ff;font-family:'Liberation Mono',monospace;letter-spacing:-0.5px">0rst=0,kclk=0,enable=0,kmode=100,dnup=0,borrow=x,carry=x,kstop=  z</div>
<div class="t" style="left:5px;top:568px;font-size:12.5px;color:#0000ff;font-family:'Liberation Mono',monospace;letter-spacing:-0.5px">#</div>
<div class="t" style="left:152px;top:568px;font-size:12.5px;color:#0000ff;font-family:'Liberation Mono',monospace;letter-spacing:-0.5px">0rst=0,kclk=0,enable=0,kmode=100,dnup=0,borrow=x,carry=x,kstop=  z</div>
<div class="t" style="left:5px;top:583px;font-size:12.5px;color:#0000ff;font-family:'Liberation Mono',monospace;letter-spacing:-0.5px">#</div>
<div class="t" style="left:152px;top:583px;font-size:12.5px;color:#0000ff;font-family:'Liberation Mono',monospace;letter-spacing:-0.5px">0rst=0,kclk=0,enable=0,kmode=100,dnup=0,borrow=x,carry=x,kstop=  z</div>
<div class="t" style="left:5px;top:598px;font-size:12.5px;color:#0000ff;font-family:'Liberation Mono',monospace;letter-spacing:-0.5px">#</div>
<div class="t" style="left:152px;top:598px;font-size:12.5px;color:#0000ff;font-family:'Liberation Mono',monospace;letter-spacing:-0.5px">0rst=0,kclk=0,enable=0,kmode=100,dnup=0,borrow=x,carry=x,kstop=  z</div>
<div class="t" style="left:5px;top:613px;font-size:12.5px;color:#0000ff;font-family:'Liberation Mono',monospace;letter-spacing:-0.5px">#</div>
<div class="t" style="left:152px;top:613px;font-size:12.5px;color:#0000ff;font-family:'Liberation Mono',monospace;letter-spacing:-0.5px">0rst=0,kclk=0,enable=0,kmode=100,dnup=0,borrow=x,carry=x,kstop=  z</div>
<div class="t" style="left:5px;top:628px;font-size:12.5px;color:#0000ff;font-family:'Liberation Mono',monospace;letter-spacing:-0.5px">#</div>
<div class="t" style="left:152px;top:628px;font-size:12.5px;color:#0000ff;font-family:'Liberation Mono',monospace;letter-spacing:-0.5px">0rst=0,kclk=0,enable=0,kmode=100,dnup=0,borrow=x,carry=x,kstop=  z</div>
<div class="t" style="left:5px;top:643px;font-size:12.5px;color:#0000ff;font-family:'Liberation Mono',monospace;letter-spacing:-0.5px">#</div>
<div class="t" style="left:152px;top:643px;font-size:12.5px;color:#0000ff;font-family:'Liberation Mono',monospace;letter-spacing:-0.5px">0rst=0,kclk=0,enable=0,kmode=100,dnup=0,borrow=x,carry=x,kstop=  z</div>
<div class="a" style="left:0px;top:697px;width:1319px;height:1px;background:#a0a0a0"></div>
<div class="a" style="left:0px;top:698px;width:1319px;height:6px;background:#f0f0f0"></div>
<div class="a" style="left:1px;top:701px;width:170px;height:3px;border-top:1px solid #808080;border-left:1px solid #808080"></div>
<div class="a" style="left:176px;top:701px;width:66px;height:3px;border-top:1px solid #808080;border-left:1px solid #808080"></div>
<div class="a" style="left:246px;top:701px;width:197px;height:3px;border-top:1px solid #808080;border-left:1px solid #808080"></div>
<div class="a" style="left:448px;top:701px;width:871px;height:3px;border-top:1px solid #808080;border-left:1px solid #808080"></div>
<svg style="left:1166px;top:648px" width="50" height="52" viewBox="0 0 50 52"><defs><filter id="sh" x="-20%" y="-20%" width="140%" height="140%"><feDropShadow dx="0.8" dy="1" stdDeviation="0.7" flood-color="#888" flood-opacity="0.8"/></filter></defs><g filter="url(#sh)" fill="none" stroke="#fcfcfc" stroke-width="2"><circle cx="23" cy="27" r="17"/><path d="M27 10 Q32 6 31 1"/><circle cx="15" cy="31" r="2.6" stroke-width="1.5"/><circle cx="31" cy="24" r="2.6" stroke-width="1.5"/><path d="M17.5 30 L28.5 25" stroke-width="1.5"/></g></svg>
<div class="t" style="left:1213px;top:661px;font-size:17px;color:#fdfdfd;font-style:italic;font-weight:bold;text-shadow:1px 1px 1px #777">电子发烧友</div>
<div class="t" style="left:1213px;top:682px;font-size:10.8px;color:#fdfdfd;font-weight:bold;text-shadow:1px 1px 1px #777">www.elecfans.com</div>
</body></html>
